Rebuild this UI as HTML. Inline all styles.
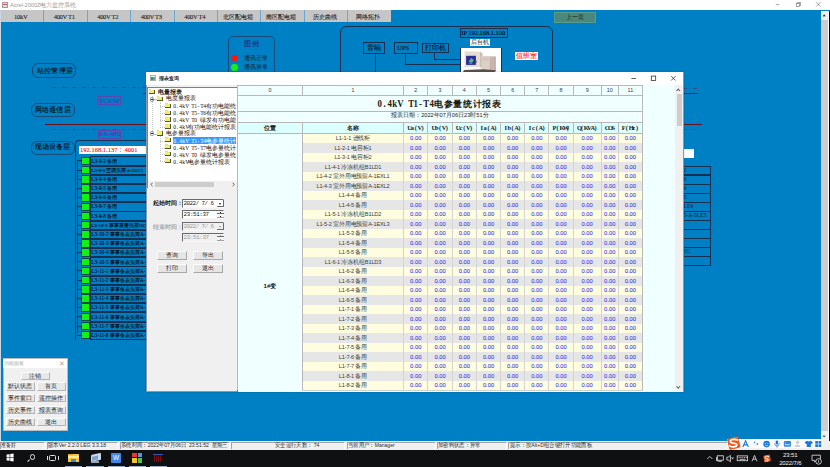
<!DOCTYPE html>
<html><head><meta charset="utf-8">
<style>
*{margin:0;padding:0;box-sizing:border-box}
html,body{width:830px;height:467px;overflow:hidden;background:#0080c4;font-family:"Liberation Sans",sans-serif;}
.a{position:absolute}
.t{position:absolute;white-space:nowrap;line-height:1}
.rbox{position:absolute;border:1px solid #1c3f66}
.sdiv{position:absolute;top:0;height:9px;border-left:1px solid #a8a8a8}
</style></head><body>
<div class="a" style="left:0px;top:0px;width:830px;height:10.3px;background:#fff"></div>
<div class="a" style="left:2px;top:2px;width:6px;height:6px;background:#e8d8dc;border:1px solid #b89098"></div>
<div class="a" style="left:3px;top:4px;width:4px;height:1px;background:#b06070"></div>
<div class="t" style="left:10px;top:2.6px;font-size:5.6px;color:#9a9a9a">Acrel-2000Z电力监控系统</div>
<svg class="a" style="left:770px;top:0" width="60" height="11" viewBox="0 0 60 11"><g stroke="#7a7a7a" stroke-width="0.7" fill="none"><line x1="5.8" y1="4.6" x2="9.2" y2="4.6"/><rect x="26.3" y="3.4" width="3.3" height="3.2"/><path d="M27.3 3.4 V2.5 H30.6 V5.7 H29.6"/><line x1="46.2" y1="2.3" x2="50.4" y2="6.5"/><line x1="50.4" y1="2.3" x2="46.2" y2="6.5"/></g></svg>
<div class="a" style="left:0px;top:10.3px;width:391px;height:11.6px;background:#c6c6c6"></div>
<div class="t" style="left:-0.8px;top:10.6px;width:43px;text-align:center;line-height:11.5px;color:#1a1a1a;-webkit-text-stroke:0.08px #1a1a1a;font-family:'Liberation Serif',serif;font-size:6.6px;letter-spacing:-0.35px">10kV</div>
<div class="a" style="left:43px;top:10.3px;width:1px;height:11.6px;background:#6aa8d0"></div>
<div class="t" style="left:42.2px;top:10.6px;width:44px;text-align:center;line-height:11.5px;color:#1a1a1a;-webkit-text-stroke:0.08px #1a1a1a;font-family:'Liberation Serif',serif;font-size:6.6px;letter-spacing:-0.35px">400V T1</div>
<div class="a" style="left:87px;top:10.3px;width:1px;height:11.6px;background:#6aa8d0"></div>
<div class="t" style="left:86.2px;top:10.6px;width:43px;text-align:center;line-height:11.5px;color:#1a1a1a;-webkit-text-stroke:0.08px #1a1a1a;font-family:'Liberation Serif',serif;font-size:6.6px;letter-spacing:-0.35px">400V T2</div>
<div class="a" style="left:130px;top:10.3px;width:1px;height:11.6px;background:#6aa8d0"></div>
<div class="t" style="left:129.2px;top:10.6px;width:44px;text-align:center;line-height:11.5px;color:#1a1a1a;-webkit-text-stroke:0.08px #1a1a1a;font-family:'Liberation Serif',serif;font-size:6.6px;letter-spacing:-0.35px">400V T3</div>
<div class="a" style="left:174px;top:10.3px;width:1px;height:11.6px;background:#6aa8d0"></div>
<div class="t" style="left:173.2px;top:10.6px;width:43px;text-align:center;line-height:11.5px;color:#1a1a1a;-webkit-text-stroke:0.08px #1a1a1a;font-family:'Liberation Serif',serif;font-size:6.6px;letter-spacing:-0.35px">400V T4</div>
<div class="a" style="left:217px;top:10.3px;width:1px;height:11.6px;background:#6aa8d0"></div>
<div class="t" style="left:216.2px;top:10.6px;width:43px;text-align:center;line-height:11.5px;color:#1a1a1a;-webkit-text-stroke:0.08px #1a1a1a;font-size:6.2px">北区配电箱</div>
<div class="a" style="left:260px;top:10.3px;width:1px;height:11.6px;background:#6aa8d0"></div>
<div class="t" style="left:259.2px;top:10.6px;width:44px;text-align:center;line-height:11.5px;color:#1a1a1a;-webkit-text-stroke:0.08px #1a1a1a;font-size:6.2px">南区配电箱</div>
<div class="a" style="left:304px;top:10.3px;width:1px;height:11.6px;background:#6aa8d0"></div>
<div class="t" style="left:303.2px;top:10.6px;width:43px;text-align:center;line-height:11.5px;color:#1a1a1a;-webkit-text-stroke:0.08px #1a1a1a;font-size:6.2px">历史曲线</div>
<div class="a" style="left:347px;top:10.3px;width:1px;height:11.6px;background:#6aa8d0"></div>
<div class="t" style="left:346.2px;top:10.6px;width:44px;text-align:center;line-height:11.5px;color:#1a1a1a;-webkit-text-stroke:0.08px #1a1a1a;font-size:6.2px">网络拓扑</div>
<div class="a" style="left:0px;top:11px;width:1.2px;height:430px;background:#c8d8e4"></div>
<div class="a" style="left:820.7px;top:10.8px;width:7.4px;height:439px;background:#f0f0f0"></div>
<div class="a" style="left:821.2px;top:20px;width:6.4px;height:411px;background:#cdcdcd"></div>
<div class="a" style="left:828.1px;top:10.8px;width:0.9px;height:456.2px;background:#fff"></div>
<div class="a" style="left:829px;top:10.8px;width:1px;height:456.2px;background:#0a0a0a"></div>
<div class="a" style="left:823.3px;top:14.6px;width:2.4px;height:2.4px;border-left:0.9px solid #333;border-top:0.9px solid #333;transform:rotate(45deg)"></div>
<div class="a" style="left:823.3px;top:435.4px;width:2.4px;height:2.4px;border-right:0.9px solid #555;border-bottom:0.9px solid #555;transform:rotate(45deg)"></div>
<!-- layers -->
<div class="a" style="left:32px;top:63.4px;width:44px;height:14.3px;border:1px solid #1a4a78;border-radius:6px"></div>
<div class="t" style="left:37px;top:67.6px;font-size:6.6px;color:#080c14;letter-spacing:0.2px;-webkit-text-stroke:0.1px #080c14">站控管理层</div>
<div class="a" style="left:30.8px;top:102.7px;width:44px;height:14.1px;border:1px solid #1a4a78;border-radius:6px"></div>
<div class="t" style="left:34.8px;top:106.5px;font-size:6.6px;color:#080c14;letter-spacing:0.2px;-webkit-text-stroke:0.1px #080c14">网络通信层</div>
<div class="a" style="left:30.8px;top:140.5px;width:44px;height:14.4px;border:1px solid #1a4a78;border-radius:6px"></div>
<div class="t" style="left:34.5px;top:144.4px;font-size:6.6px;color:#080c14;letter-spacing:0.2px;-webkit-text-stroke:0.1px #080c14">现场设备层</div>
<div class="a" style="left:52px;top:87.3px;width:95px;height:1px;background:repeating-linear-gradient(90deg,#32527a 0 4px,transparent 4px 6px,#32527a 6px 7.2px,transparent 7.2px 10px)"></div>
<div class="a" style="left:52px;top:128.7px;width:95px;height:1px;background:repeating-linear-gradient(90deg,#32527a 0 4px,transparent 4px 6px,#32527a 6px 7.2px,transparent 7.2px 10px)"></div>
<div class="a" style="left:45px;top:124px;width:102px;height:1.2px;background:#6a1020"></div>
<div class="a" style="left:142.5px;top:92.8px;width:4px;height:1.2px;background:#8a1020"></div>
<div class="a" style="left:97.7px;top:96.3px;width:23.6px;height:9px;border:1px solid #5a48b0"></div>
<div class="t" style="left:97.7px;top:97.8px;width:23.6px;text-align:center;font-size:7px;color:#5030c0;font-family:'Liberation Serif',serif;-webkit-text-stroke:0.1px #5030c0">TCP/IP</div>
<div class="a" style="left:97.7px;top:130.2px;width:23.6px;height:8.5px;border:1px solid #5a48b0"></div>
<div class="t" style="left:97.7px;top:131.4px;width:23.6px;text-align:center;font-size:7px;color:#5030c0;font-family:'Liberation Serif',serif;-webkit-text-stroke:0.1px #5030c0">RS-485</div>
<div class="a" style="left:75.4px;top:140.4px;width:80px;height:200px;border-left:1px solid #1a3050;border-top:1px solid #1a3050;border-top-left-radius:4px"></div>
<div class="a" style="left:78.8px;top:145.7px;width:70px;height:8.1px;background:#fff"></div>
<div class="t" style="left:80px;top:146.9px;font-size:6.5px;color:#f01010;font-family:'Liberation Serif',serif;-webkit-text-stroke:0.1px #f01010">192.168.1.137：4001</div>
<div class="a" style="left:76.7px;top:160px;width:1px;height:173px;background:#1a3050"></div>
<div class="a" style="left:76.7px;top:160.4px;width:4px;height:1px;background:#1a3050"></div>
<div class="a" style="left:80.8px;top:156.7px;width:8.8px;height:8.6px;background:#14f014;border:0.6px solid #0a4a50"></div>
<div class="a" style="left:89.6px;top:156.4px;width:60px;height:9.4px;border:1px solid #1a3050"></div>
<div class="t" style="left:91.3px;top:158.6px;font-size:5.3px;color:#050a14;font-family:'Liberation Serif',serif;-webkit-text-stroke:0.1px #050a14">L3-9-2 备用</div>
<div class="a" style="left:76.7px;top:169.6px;width:4px;height:1px;background:#1a3050"></div>
<div class="a" style="left:80.8px;top:165.9px;width:8.8px;height:8.6px;background:#14f014;border:0.6px solid #0a4a50"></div>
<div class="a" style="left:89.6px;top:165.6px;width:60px;height:9.4px;border:1px solid #1a3050"></div>
<div class="t" style="left:91.3px;top:167.8px;font-size:5.0px;color:#050a14;font-family:'Liberation Serif',serif;-webkit-text-stroke:0.1px #050a14">L3-9-3 空调负荷A-1DT1</div>
<div class="a" style="left:76.7px;top:178.7px;width:4px;height:1px;background:#1a3050"></div>
<div class="a" style="left:80.8px;top:175.0px;width:8.8px;height:8.6px;background:#14f014;border:0.6px solid #0a4a50"></div>
<div class="a" style="left:89.6px;top:174.7px;width:60px;height:9.4px;border:1px solid #1a3050"></div>
<div class="t" style="left:91.3px;top:176.9px;font-size:5.3px;color:#050a14;font-family:'Liberation Serif',serif;-webkit-text-stroke:0.1px #050a14">L3-9-4 备用</div>
<div class="a" style="left:76.7px;top:187.9px;width:4px;height:1px;background:#1a3050"></div>
<div class="a" style="left:80.8px;top:184.2px;width:8.8px;height:8.6px;background:#14f014;border:0.6px solid #0a4a50"></div>
<div class="a" style="left:89.6px;top:183.9px;width:60px;height:9.4px;border:1px solid #1a3050"></div>
<div class="t" style="left:91.3px;top:186.1px;font-size:5.3px;color:#050a14;font-family:'Liberation Serif',serif;-webkit-text-stroke:0.1px #050a14">L3-9-5 备用</div>
<div class="a" style="left:76.7px;top:197.1px;width:4px;height:1px;background:#1a3050"></div>
<div class="a" style="left:80.8px;top:193.4px;width:8.8px;height:8.6px;background:#14f014;border:0.6px solid #0a4a50"></div>
<div class="a" style="left:89.6px;top:193.1px;width:60px;height:9.4px;border:1px solid #1a3050"></div>
<div class="t" style="left:91.3px;top:195.3px;font-size:5.3px;color:#050a14;font-family:'Liberation Serif',serif;-webkit-text-stroke:0.1px #050a14">L3-9-6 备用</div>
<div class="a" style="left:76.7px;top:206.2px;width:4px;height:1px;background:#1a3050"></div>
<div class="a" style="left:80.8px;top:202.6px;width:8.8px;height:8.6px;background:#14f014;border:0.6px solid #0a4a50"></div>
<div class="a" style="left:89.6px;top:202.2px;width:60px;height:9.4px;border:1px solid #1a3050"></div>
<div class="t" style="left:91.3px;top:204.4px;font-size:5.3px;color:#050a14;font-family:'Liberation Serif',serif;-webkit-text-stroke:0.1px #050a14">L3-9-7 备用</div>
<div class="a" style="left:76.7px;top:215.4px;width:4px;height:1px;background:#1a3050"></div>
<div class="a" style="left:80.8px;top:211.7px;width:8.8px;height:8.6px;background:#14f014;border:0.6px solid #0a4a50"></div>
<div class="a" style="left:89.6px;top:211.4px;width:60px;height:9.4px;border:1px solid #1a3050"></div>
<div class="t" style="left:91.3px;top:213.6px;font-size:5.3px;color:#050a14;font-family:'Liberation Serif',serif;-webkit-text-stroke:0.1px #050a14">L3-9-8 备用</div>
<div class="a" style="left:76.7px;top:224.6px;width:4px;height:1px;background:#1a3050"></div>
<div class="a" style="left:80.8px;top:220.9px;width:8.8px;height:8.6px;background:#14f014;border:0.6px solid #0a4a50"></div>
<div class="a" style="left:89.6px;top:220.6px;width:60px;height:9.4px;border:1px solid #1a3050"></div>
<div class="t" style="left:91.3px;top:222.8px;font-size:5.0px;color:#050a14;font-family:'Liberation Serif',serif;-webkit-text-stroke:0.1px #050a14">L3-10-1 事事重要负荷DCS A</div>
<div class="a" style="left:76.7px;top:233.8px;width:4px;height:1px;background:#1a3050"></div>
<div class="a" style="left:80.8px;top:230.1px;width:8.8px;height:8.6px;background:#14f014;border:0.6px solid #0a4a50"></div>
<div class="a" style="left:89.6px;top:229.8px;width:60px;height:9.4px;border:1px solid #1a3050"></div>
<div class="t" style="left:91.3px;top:232.0px;font-size:5.3px;color:#050a14;font-family:'Liberation Serif',serif;-webkit-text-stroke:0.1px #050a14">L3-10-2 事事备表负荷A-</div>
<div class="a" style="left:76.7px;top:242.9px;width:4px;height:1px;background:#1a3050"></div>
<div class="a" style="left:80.8px;top:239.2px;width:8.8px;height:8.6px;background:#14f014;border:0.6px solid #0a4a50"></div>
<div class="a" style="left:89.6px;top:238.9px;width:60px;height:9.4px;border:1px solid #1a3050"></div>
<div class="t" style="left:91.3px;top:241.1px;font-size:5.3px;color:#050a14;font-family:'Liberation Serif',serif;-webkit-text-stroke:0.1px #050a14">L3-10-3 事事备表负荷A-</div>
<div class="a" style="left:76.7px;top:252.1px;width:4px;height:1px;background:#1a3050"></div>
<div class="a" style="left:80.8px;top:248.4px;width:8.8px;height:8.6px;background:#14f014;border:0.6px solid #0a4a50"></div>
<div class="a" style="left:89.6px;top:248.1px;width:60px;height:9.4px;border:1px solid #1a3050"></div>
<div class="t" style="left:91.3px;top:250.3px;font-size:5.3px;color:#050a14;font-family:'Liberation Serif',serif;-webkit-text-stroke:0.1px #050a14">L3-10-4 事事备表负荷A-</div>
<div class="a" style="left:76.7px;top:261.3px;width:4px;height:1px;background:#1a3050"></div>
<div class="a" style="left:80.8px;top:257.6px;width:8.8px;height:8.6px;background:#14f014;border:0.6px solid #0a4a50"></div>
<div class="a" style="left:89.6px;top:257.3px;width:60px;height:9.4px;border:1px solid #1a3050"></div>
<div class="t" style="left:91.3px;top:259.5px;font-size:5.3px;color:#050a14;font-family:'Liberation Serif',serif;-webkit-text-stroke:0.1px #050a14">L3-10-5 事事备表负荷A-</div>
<div class="a" style="left:76.7px;top:270.4px;width:4px;height:1px;background:#1a3050"></div>
<div class="a" style="left:80.8px;top:266.7px;width:8.8px;height:8.6px;background:#14f014;border:0.6px solid #0a4a50"></div>
<div class="a" style="left:89.6px;top:266.4px;width:60px;height:9.4px;border:1px solid #1a3050"></div>
<div class="t" style="left:91.3px;top:268.6px;font-size:5.3px;color:#050a14;font-family:'Liberation Serif',serif;-webkit-text-stroke:0.1px #050a14">L3-11-1 事事备表负荷A-</div>
<div class="a" style="left:76.7px;top:279.6px;width:4px;height:1px;background:#1a3050"></div>
<div class="a" style="left:80.8px;top:275.9px;width:8.8px;height:8.6px;background:#14f014;border:0.6px solid #0a4a50"></div>
<div class="a" style="left:89.6px;top:275.6px;width:60px;height:9.4px;border:1px solid #1a3050"></div>
<div class="t" style="left:91.3px;top:277.8px;font-size:5.3px;color:#050a14;font-family:'Liberation Serif',serif;-webkit-text-stroke:0.1px #050a14">L3-11-2 事事备表负荷A-</div>
<div class="a" style="left:76.7px;top:288.8px;width:4px;height:1px;background:#1a3050"></div>
<div class="a" style="left:80.8px;top:285.1px;width:8.8px;height:8.6px;background:#14f014;border:0.6px solid #0a4a50"></div>
<div class="a" style="left:89.6px;top:284.8px;width:60px;height:9.4px;border:1px solid #1a3050"></div>
<div class="t" style="left:91.3px;top:287.0px;font-size:5.3px;color:#050a14;font-family:'Liberation Serif',serif;-webkit-text-stroke:0.1px #050a14">L3-11-3 事事备表负荷A-</div>
<div class="a" style="left:76.7px;top:298.0px;width:4px;height:1px;background:#1a3050"></div>
<div class="a" style="left:80.8px;top:294.3px;width:8.8px;height:8.6px;background:#14f014;border:0.6px solid #0a4a50"></div>
<div class="a" style="left:89.6px;top:294.0px;width:60px;height:9.4px;border:1px solid #1a3050"></div>
<div class="t" style="left:91.3px;top:296.2px;font-size:5.3px;color:#050a14;font-family:'Liberation Serif',serif;-webkit-text-stroke:0.1px #050a14">L3-11-4 事事备表负荷A-</div>
<div class="a" style="left:76.7px;top:307.1px;width:4px;height:1px;background:#1a3050"></div>
<div class="a" style="left:80.8px;top:303.4px;width:8.8px;height:8.6px;background:#14f014;border:0.6px solid #0a4a50"></div>
<div class="a" style="left:89.6px;top:303.1px;width:60px;height:9.4px;border:1px solid #1a3050"></div>
<div class="t" style="left:91.3px;top:305.3px;font-size:5.3px;color:#050a14;font-family:'Liberation Serif',serif;-webkit-text-stroke:0.1px #050a14">L3-11-5 事事备表负荷A-</div>
<div class="a" style="left:76.7px;top:316.3px;width:4px;height:1px;background:#1a3050"></div>
<div class="a" style="left:80.8px;top:312.6px;width:8.8px;height:8.6px;background:#14f014;border:0.6px solid #0a4a50"></div>
<div class="a" style="left:89.6px;top:312.3px;width:60px;height:9.4px;border:1px solid #1a3050"></div>
<div class="t" style="left:91.3px;top:314.5px;font-size:5.3px;color:#050a14;font-family:'Liberation Serif',serif;-webkit-text-stroke:0.1px #050a14">L3-11-6 事事备表负荷A-</div>
<div class="a" style="left:76.7px;top:325.5px;width:4px;height:1px;background:#1a3050"></div>
<div class="a" style="left:80.8px;top:321.8px;width:8.8px;height:8.6px;background:#14f014;border:0.6px solid #0a4a50"></div>
<div class="a" style="left:89.6px;top:321.5px;width:60px;height:9.4px;border:1px solid #1a3050"></div>
<div class="t" style="left:91.3px;top:323.7px;font-size:5.3px;color:#050a14;font-family:'Liberation Serif',serif;-webkit-text-stroke:0.1px #050a14">L3-11-7 事事备表负荷A-</div>
<div class="a" style="left:76.7px;top:334.6px;width:4px;height:1px;background:#1a3050"></div>
<div class="a" style="left:80.8px;top:330.9px;width:8.8px;height:8.6px;background:#14f014;border:0.6px solid #0a4a50"></div>
<div class="a" style="left:89.6px;top:330.6px;width:60px;height:9.4px;border:1px solid #1a3050"></div>
<div class="t" style="left:91.3px;top:332.8px;font-size:5.3px;color:#050a14;font-family:'Liberation Serif',serif;-webkit-text-stroke:0.1px #050a14">L3-11-8 事事备表负荷A-</div>
<div class="a" style="left:227.7px;top:36.4px;width:47.5px;height:40px;border:1px solid #1a4a78;border-radius:5px"></div>
<div class="t" style="left:243.6px;top:41.3px;font-size:6.6px;color:#1a3a88;letter-spacing:1.2px;-webkit-text-stroke:0.2px #1a3a88">图例</div>
<div class="a" style="left:231.4px;top:54.7px;width:6.3px;height:6.3px;border-radius:50%;background:#ff1414"></div>
<div class="t" style="left:243.5px;top:54.7px;font-size:6.3px;color:#0a1628">通讯正常</div>
<div class="a" style="left:231.4px;top:64.4px;width:6.3px;height:6.3px;border-radius:50%;background:#14f014"></div>
<div class="t" style="left:243.5px;top:64.4px;font-size:6.3px;color:#0a1628">通讯异常</div>
<div class="a" style="left:339.8px;top:26.2px;width:213px;height:60px;border:1px solid #1a3050;border-radius:6px"></div>
<div class="a" style="left:362.9px;top:42.4px;width:21.7px;height:11.3px;border:1px solid #1a3050"></div>
<div class="t" style="left:362.9px;top:44.9px;width:21.7px;text-align:center;font-size:6.5px;color:#050a14;-webkit-text-stroke:0.08px #050a14">音响</div>
<div class="a" style="left:394.2px;top:42.4px;width:23.5px;height:11.3px;border:1px solid #1a3050"></div>
<div class="t" style="left:394.2px;top:44.9px;width:18px;text-align:center;font-size:6.4px;color:#050a14;font-family:'Liberation Serif',serif;-webkit-text-stroke:0.08px #050a14">UPS</div>
<div class="a" style="left:421.6px;top:42.5px;width:27.1px;height:10.8px;border:1px solid #1a3050"></div>
<div class="t" style="left:421.6px;top:44.8px;width:27.1px;text-align:center;font-size:6.5px;color:#050a14;-webkit-text-stroke:0.08px #050a14">打印机</div>
<div class="a" style="left:375px;top:53.7px;width:1px;height:20px;background:#1a3050"></div>
<div class="a" style="left:405px;top:53.7px;width:1px;height:10.6px;background:#1a3050"></div>
<div class="a" style="left:405px;top:64px;width:55px;height:1px;background:#1a3050"></div>
<div class="a" style="left:434.4px;top:53.3px;width:1px;height:6.2px;background:#1a3050"></div>
<div class="a" style="left:434.4px;top:59.2px;width:26px;height:1px;background:#1a3050"></div>
<div class="a" style="left:460.3px;top:28.1px;width:48.2px;height:9.6px;border:1px solid #1a3050"></div>
<div class="t" style="left:461.3px;top:29.8px;font-size:6.4px;color:#050a14;font-family:'Liberation Serif',serif;-webkit-text-stroke:0.12px #050a14">IP 192.168.1.100</div>
<div class="a" style="left:469.7px;top:38.7px;width:20.5px;height:7.7px;background:#fff"></div>
<div class="t" style="left:469.7px;top:39.3px;width:20.5px;text-align:center;font-size:6.4px;color:#111">后台机</div>
<div class="a" style="left:459.5px;top:48.2px;width:42.8px;height:24px;background:#fff;border-left:0.8px solid #1a3050;border-right:0.8px solid #1a3050"></div>
<svg class="a" style="left:455px;top:45px" width="50" height="27" viewBox="0 0 50 27">
<path d="M9.6 6.3 L25 6.8 L27.5 8.5 L27 22.3 L9.6 22.3 Z" fill="#e6dcd0"/>
<path d="M25 6.8 L27.5 8.5 L27 22.3 L25 22.3 Z" fill="#cdbfb2"/>
<rect x="11.1" y="10.8" width="9.8" height="9.1" fill="#2c2c98"/>
<path d="M13.5 16.5 L16.3 13 L18.8 15 L17 18 Z" fill="#50c070"/>
<path d="M13 18.5 L18 19 L15.5 17.5 Z" fill="#40a0d0"/>
<rect x="20.2" y="15.6" width="1.5" height="2.2" fill="#6a5a50"/>
<rect x="26.5" y="11.1" width="8.2" height="14.9" fill="#dcd0c8"/>
<rect x="34.5" y="11.4" width="6.5" height="14.6" fill="#c8b4ac"/>
<path d="M27.5 13 H33.5 M27.5 15 H33.5" stroke="#bcaea4" stroke-width="0.5"/>
<path d="M9 25 L28 24.2 L41 25.2 L40 27 L8 27 Z" fill="#5a524a"/>
</svg>
<div class="a" style="left:515.2px;top:51.8px;width:23.1px;height:8.7px;background:#fff"></div>
<div class="t" style="left:515.2px;top:52.9px;width:23.1px;text-align:center;font-size:6.5px;color:#ff1a1a;-webkit-text-stroke:0.1px #ff1a1a">值班室</div>
<div class="a" style="left:553.7px;top:11.7px;width:42.8px;height:11px;background:#4a887c;border:0.6px solid #5c9a90"></div>
<div class="t" style="left:553.7px;top:14px;width:42.8px;text-align:center;font-size:6.3px;color:#111">上一页</div>
<div class="a" style="left:683px;top:87.5px;width:14px;height:1px;background:repeating-linear-gradient(90deg,#32527a 0 4px,transparent 4px 6px,#32527a 6px 7.2px,transparent 7.2px 10px)"></div>
<div class="a" style="left:683px;top:92.8px;width:15px;height:1.2px;background:#6a1020"></div>
<div class="a" style="left:683px;top:124px;width:19px;height:1.2px;background:#6a1020"></div>
<div class="a" style="left:683px;top:128.8px;width:13px;height:1px;background:repeating-linear-gradient(90deg,#32527a 0 4px,transparent 4px 6px,#32527a 6px 7.2px,transparent 7.2px 10px)"></div>
<div class="a" style="left:683px;top:149.3px;width:10.5px;height:8.4px;background:#fff"></div>
<div class="a" style="left:670px;top:165.7px;width:40.8px;height:9.8px;border:1px solid #1a3050"></div>
<div class="t" style="left:683.5px;top:167.9px;font-size:5.6px;color:#0a1628;font-family:'Liberation Serif',serif">2</div>
<div class="a" style="left:670px;top:174.8px;width:40.8px;height:9.8px;border:1px solid #1a3050"></div>
<div class="t" style="left:683.5px;top:177.0px;font-size:5.6px;color:#0a1628;font-family:'Liberation Serif',serif">3</div>
<div class="a" style="left:670px;top:183.8px;width:40.8px;height:9.8px;border:1px solid #1a3050"></div>
<div class="t" style="left:683.5px;top:186.0px;font-size:5.6px;color:#0a1628;font-family:'Liberation Serif',serif">4</div>
<div class="a" style="left:670px;top:192.9px;width:40.8px;height:9.8px;border:1px solid #1a3050"></div>
<div class="t" style="left:683.5px;top:195.1px;font-size:5.6px;color:#0a1628;font-family:'Liberation Serif',serif">5</div>
<div class="a" style="left:670px;top:201.9px;width:40.8px;height:9.8px;border:1px solid #1a3050"></div>
<div class="t" style="left:683.5px;top:204.1px;font-size:5.6px;color:#0a1628;font-family:'Liberation Serif',serif">LE4</div>
<div class="a" style="left:670px;top:211.0px;width:40.8px;height:9.8px;border:1px solid #1a3050"></div>
<div class="t" style="left:683.5px;top:213.2px;font-size:5.6px;color:#0a1628;font-family:'Liberation Serif',serif">5-A-5LE5</div>
<div class="a" style="left:670px;top:220.1px;width:40.8px;height:9.8px;border:1px solid #1a3050"></div>
<div class="a" style="left:670px;top:229.1px;width:40.8px;height:9.8px;border:1px solid #1a3050"></div>
<div class="a" style="left:670px;top:238.2px;width:40.8px;height:9.8px;border:1px solid #1a3050"></div>
<div class="a" style="left:670px;top:247.2px;width:40.8px;height:9.8px;border:1px solid #1a3050"></div>
<div class="t" style="left:683.5px;top:249.4px;font-size:5.6px;color:#0a1628;font-family:'Liberation Serif',serif">TC</div>
<div class="a" style="left:670px;top:256.3px;width:40.8px;height:9.8px;border:1px solid #1a3050"></div>
<!-- dialog -->
<div class="a" style="left:145.5px;top:71.6px;width:538px;height:320.6px;background:#f0f0f0;border:1px solid #8a9aa8;box-shadow:0 0 2px rgba(0,0,0,0.2)"></div>
<div class="a" style="left:146px;top:72.2px;width:537px;height:13.1px;background:#fff"></div>
<div class="a" style="left:149.8px;top:75.1px;width:6.4px;height:5.5px;background:#f4f8f4;border:0.8px solid #a8b0a8"></div>
<div class="a" style="left:151px;top:76.8px;width:2.2px;height:3px;background:#20a060"></div>
<div class="a" style="left:153.3px;top:76.8px;width:1.6px;height:3px;background:#8090e0"></div>
<div class="t" style="left:159px;top:75.6px;font-size:5.3px;color:#111;-webkit-text-stroke:0.15px #111">报表查询</div>
<svg class="a" style="left:625px;top:72px" width="55" height="13" viewBox="0 0 55 13"><g stroke="#2a2a2a" stroke-width="0.75" fill="none"><line x1="6.4" y1="6.5" x2="11" y2="6.5"/><rect x="26.3" y="4.1" width="4.4" height="4.4"/><line x1="46.2" y1="4.1" x2="50.6" y2="8.5"/><line x1="50.6" y1="4.1" x2="46.2" y2="8.5"/></g></svg>
<div class="a" style="left:147.2px;top:86.8px;width:90px;height:101px;background:#fff;border-top:1px solid #828282;border-left:1px solid #828282"></div>
<div class="a" style="left:148.9px;top:89.9px;width:6px;height:4.4px;background:#eeee74;border-right:0.9px solid #55552a;border-bottom:0.9px solid #55552a"></div>
<div class="a" style="left:148.9px;top:89.2px;width:2.6px;height:0.9px;background:#e4e070"></div>
<div class="t" style="left:157.5px;top:89.6px;font-size:5.7px;color:#111;font-weight:bold">电量报表</div>
<div class="a" style="left:156.6px;top:96.78px;width:6px;height:4.4px;background:#eeee74;border-right:0.9px solid #55552a;border-bottom:0.9px solid #55552a"></div>
<div class="a" style="left:156.6px;top:96.08px;width:2.6px;height:0.9px;background:#e4e070"></div>
<div class="t" style="left:165.6px;top:96.48px;font-size:5.7px;color:#111;font-weight:normal">电度量报表</div>
<div class="a" style="left:149.5px;top:97.08px;width:4.6px;height:4.5px;border:0.7px solid #8c8c8c;border-radius:1.6px;background:#fff"></div>
<div class="a" style="left:150.6px;top:99.08px;width:2.4px;height:0.6px;background:#333"></div>
<div class="a" style="left:154.2px;top:99.38px;width:2.2px;height:0px;border-top:0.6px dotted #c0c0c0"></div>
<div class="a" style="left:165.0px;top:103.66px;width:6px;height:4.4px;background:#eeee74;border-right:0.9px solid #55552a;border-bottom:0.9px solid #55552a"></div>
<div class="a" style="left:165.0px;top:102.96px;width:2.6px;height:0.9px;background:#e4e070"></div>
<div class="t" style="left:173.3px;top:103.46px;font-size:5.5px;color:#111;width:62.9px;overflow:hidden"><span style="display:inline-block;width:3.0px;text-align:center;transform:scaleX(0.88);font-family:'Liberation Serif',serif;font-size:6.3px">0</span><span style="display:inline-block;width:3.0px;text-align:center;transform:scaleX(0.88);font-family:'Liberation Serif',serif;font-size:6.3px">.</span><span style="display:inline-block;width:3.0px;text-align:center;transform:scaleX(0.88);font-family:'Liberation Serif',serif;font-size:6.3px">4</span><span style="display:inline-block;width:3.0px;text-align:center;transform:scaleX(0.88);font-family:'Liberation Serif',serif;font-size:6.3px">k</span><span style="display:inline-block;width:3.0px;text-align:center;transform:scaleX(0.88);font-family:'Liberation Serif',serif;font-size:6.3px">V</span><span style="display:inline-block;width:3.0px;text-align:center;transform:scaleX(0.88);font-family:'Liberation Serif',serif;font-size:6.3px">&nbsp;</span><span style="display:inline-block;width:3.0px;text-align:center;transform:scaleX(0.88);font-family:'Liberation Serif',serif;font-size:6.3px">T</span><span style="display:inline-block;width:3.0px;text-align:center;transform:scaleX(0.88);font-family:'Liberation Serif',serif;font-size:6.3px">1</span><span style="display:inline-block;width:3.0px;text-align:center;transform:scaleX(0.88);font-family:'Liberation Serif',serif;font-size:6.3px">-</span><span style="display:inline-block;width:3.0px;text-align:center;transform:scaleX(0.88);font-family:'Liberation Serif',serif;font-size:6.3px">T</span><span style="display:inline-block;width:3.0px;text-align:center;transform:scaleX(0.88);font-family:'Liberation Serif',serif;font-size:6.3px">4</span><span style="display:inline-block;width:5.9px;text-align:center;">有</span><span style="display:inline-block;width:5.9px;text-align:center;">功</span><span style="display:inline-block;width:5.9px;text-align:center;">电</span><span style="display:inline-block;width:5.9px;text-align:center;">能</span><span style="display:inline-block;width:5.9px;text-align:center;">统</span><span style="display:inline-block;width:5.9px;text-align:center;">计</span><span style="display:inline-block;width:5.9px;text-align:center;">报</span><span style="display:inline-block;width:5.9px;text-align:center;">表</span></div>
<div class="a" style="left:159.5px;top:106.26px;width:5.3px;height:0px;border-top:0.6px dotted #c0c0c0"></div>
<div class="a" style="left:165.0px;top:110.54px;width:6px;height:4.4px;background:#eeee74;border-right:0.9px solid #55552a;border-bottom:0.9px solid #55552a"></div>
<div class="a" style="left:165.0px;top:109.84px;width:2.6px;height:0.9px;background:#e4e070"></div>
<div class="t" style="left:173.3px;top:110.34px;font-size:5.5px;color:#111;width:62.9px;overflow:hidden"><span style="display:inline-block;width:3.0px;text-align:center;transform:scaleX(0.88);font-family:'Liberation Serif',serif;font-size:6.3px">0</span><span style="display:inline-block;width:3.0px;text-align:center;transform:scaleX(0.88);font-family:'Liberation Serif',serif;font-size:6.3px">.</span><span style="display:inline-block;width:3.0px;text-align:center;transform:scaleX(0.88);font-family:'Liberation Serif',serif;font-size:6.3px">4</span><span style="display:inline-block;width:3.0px;text-align:center;transform:scaleX(0.88);font-family:'Liberation Serif',serif;font-size:6.3px">k</span><span style="display:inline-block;width:3.0px;text-align:center;transform:scaleX(0.88);font-family:'Liberation Serif',serif;font-size:6.3px">V</span><span style="display:inline-block;width:3.0px;text-align:center;transform:scaleX(0.88);font-family:'Liberation Serif',serif;font-size:6.3px">&nbsp;</span><span style="display:inline-block;width:3.0px;text-align:center;transform:scaleX(0.88);font-family:'Liberation Serif',serif;font-size:6.3px">T</span><span style="display:inline-block;width:3.0px;text-align:center;transform:scaleX(0.88);font-family:'Liberation Serif',serif;font-size:6.3px">5</span><span style="display:inline-block;width:3.0px;text-align:center;transform:scaleX(0.88);font-family:'Liberation Serif',serif;font-size:6.3px">-</span><span style="display:inline-block;width:3.0px;text-align:center;transform:scaleX(0.88);font-family:'Liberation Serif',serif;font-size:6.3px">T</span><span style="display:inline-block;width:3.0px;text-align:center;transform:scaleX(0.88);font-family:'Liberation Serif',serif;font-size:6.3px">6</span><span style="display:inline-block;width:5.9px;text-align:center;">有</span><span style="display:inline-block;width:5.9px;text-align:center;">功</span><span style="display:inline-block;width:5.9px;text-align:center;">电</span><span style="display:inline-block;width:5.9px;text-align:center;">能</span><span style="display:inline-block;width:5.9px;text-align:center;">统</span><span style="display:inline-block;width:5.9px;text-align:center;">计</span><span style="display:inline-block;width:5.9px;text-align:center;">报</span><span style="display:inline-block;width:5.9px;text-align:center;">表</span></div>
<div class="a" style="left:159.5px;top:113.14px;width:5.3px;height:0px;border-top:0.6px dotted #c0c0c0"></div>
<div class="a" style="left:165.0px;top:117.42px;width:6px;height:4.4px;background:#eeee74;border-right:0.9px solid #55552a;border-bottom:0.9px solid #55552a"></div>
<div class="a" style="left:165.0px;top:116.72px;width:2.6px;height:0.9px;background:#e4e070"></div>
<div class="t" style="left:173.3px;top:117.22px;font-size:5.5px;color:#111;width:62.9px;overflow:hidden"><span style="display:inline-block;width:3.0px;text-align:center;transform:scaleX(0.88);font-family:'Liberation Serif',serif;font-size:6.3px">0</span><span style="display:inline-block;width:3.0px;text-align:center;transform:scaleX(0.88);font-family:'Liberation Serif',serif;font-size:6.3px">.</span><span style="display:inline-block;width:3.0px;text-align:center;transform:scaleX(0.88);font-family:'Liberation Serif',serif;font-size:6.3px">4</span><span style="display:inline-block;width:3.0px;text-align:center;transform:scaleX(0.88);font-family:'Liberation Serif',serif;font-size:6.3px">k</span><span style="display:inline-block;width:3.0px;text-align:center;transform:scaleX(0.88);font-family:'Liberation Serif',serif;font-size:6.3px">V</span><span style="display:inline-block;width:3.0px;text-align:center;transform:scaleX(0.88);font-family:'Liberation Serif',serif;font-size:6.3px">&nbsp;</span><span style="display:inline-block;width:3.0px;text-align:center;transform:scaleX(0.88);font-family:'Liberation Serif',serif;font-size:6.3px">T</span><span style="display:inline-block;width:3.0px;text-align:center;transform:scaleX(0.88);font-family:'Liberation Serif',serif;font-size:6.3px">0</span><span style="display:inline-block;width:3.0px;text-align:center;transform:scaleX(0.88);font-family:'Liberation Serif',serif;font-size:6.3px">&nbsp;</span><span style="display:inline-block;width:5.9px;text-align:center;">绿</span><span style="display:inline-block;width:5.9px;text-align:center;">发</span><span style="display:inline-block;width:5.9px;text-align:center;">有</span><span style="display:inline-block;width:5.9px;text-align:center;">功</span><span style="display:inline-block;width:5.9px;text-align:center;">电</span><span style="display:inline-block;width:5.9px;text-align:center;">能</span><span style="display:inline-block;width:5.9px;text-align:center;">统</span><span style="display:inline-block;width:5.9px;text-align:center;">计</span></div>
<div class="a" style="left:159.5px;top:120.02px;width:5.3px;height:0px;border-top:0.6px dotted #c0c0c0"></div>
<div class="a" style="left:165.0px;top:124.3px;width:6px;height:4.4px;background:#eeee74;border-right:0.9px solid #55552a;border-bottom:0.9px solid #55552a"></div>
<div class="a" style="left:165.0px;top:123.6px;width:2.6px;height:0.9px;background:#e4e070"></div>
<div class="t" style="left:173.3px;top:124.1px;font-size:5.5px;color:#111;width:62.9px;overflow:hidden"><span style="display:inline-block;width:3.0px;text-align:center;transform:scaleX(0.88);font-family:'Liberation Serif',serif;font-size:6.3px">0</span><span style="display:inline-block;width:3.0px;text-align:center;transform:scaleX(0.88);font-family:'Liberation Serif',serif;font-size:6.3px">.</span><span style="display:inline-block;width:3.0px;text-align:center;transform:scaleX(0.88);font-family:'Liberation Serif',serif;font-size:6.3px">4</span><span style="display:inline-block;width:3.0px;text-align:center;transform:scaleX(0.88);font-family:'Liberation Serif',serif;font-size:6.3px">k</span><span style="display:inline-block;width:3.0px;text-align:center;transform:scaleX(0.88);font-family:'Liberation Serif',serif;font-size:6.3px">V</span><span style="display:inline-block;width:5.9px;text-align:center;">有</span><span style="display:inline-block;width:5.9px;text-align:center;">功</span><span style="display:inline-block;width:5.9px;text-align:center;">电</span><span style="display:inline-block;width:5.9px;text-align:center;">能</span><span style="display:inline-block;width:5.9px;text-align:center;">统</span><span style="display:inline-block;width:5.9px;text-align:center;">计</span><span style="display:inline-block;width:5.9px;text-align:center;">报</span><span style="display:inline-block;width:5.9px;text-align:center;">表</span></div>
<div class="a" style="left:159.5px;top:126.9px;width:5.3px;height:0px;border-top:0.6px dotted #c0c0c0"></div>
<div class="a" style="left:156.6px;top:131.18px;width:6px;height:4.4px;background:#eeee74;border-right:0.9px solid #55552a;border-bottom:0.9px solid #55552a"></div>
<div class="a" style="left:156.6px;top:130.48px;width:2.6px;height:0.9px;background:#e4e070"></div>
<div class="t" style="left:165.6px;top:130.88px;font-size:5.7px;color:#111;font-weight:normal">电参量报表</div>
<div class="a" style="left:149.5px;top:131.48px;width:4.6px;height:4.5px;border:0.7px solid #8c8c8c;border-radius:1.6px;background:#fff"></div>
<div class="a" style="left:150.6px;top:133.48px;width:2.4px;height:0.6px;background:#333"></div>
<div class="a" style="left:154.2px;top:133.78px;width:2.2px;height:0px;border-top:0.6px dotted #c0c0c0"></div>
<div class="a" style="left:165.0px;top:138.06px;width:6px;height:4.4px;background:#eeee74;border-right:0.9px solid #55552a;border-bottom:0.9px solid #55552a"></div>
<div class="a" style="left:165.0px;top:137.36px;width:2.6px;height:0.9px;background:#e4e070"></div>
<div class="a" style="left:172.6px;top:136.96px;width:63.4px;height:6.6px;background:#3399ff"></div>
<div class="t" style="left:173.3px;top:137.86px;font-size:5.5px;color:#fff;width:62.9px;overflow:hidden"><span style="display:inline-block;width:3.0px;text-align:center;transform:scaleX(0.88);font-family:'Liberation Serif',serif;font-size:6.3px">0</span><span style="display:inline-block;width:3.0px;text-align:center;transform:scaleX(0.88);font-family:'Liberation Serif',serif;font-size:6.3px">.</span><span style="display:inline-block;width:3.0px;text-align:center;transform:scaleX(0.88);font-family:'Liberation Serif',serif;font-size:6.3px">4</span><span style="display:inline-block;width:3.0px;text-align:center;transform:scaleX(0.88);font-family:'Liberation Serif',serif;font-size:6.3px">k</span><span style="display:inline-block;width:3.0px;text-align:center;transform:scaleX(0.88);font-family:'Liberation Serif',serif;font-size:6.3px">V</span><span style="display:inline-block;width:3.0px;text-align:center;transform:scaleX(0.88);font-family:'Liberation Serif',serif;font-size:6.3px">&nbsp;</span><span style="display:inline-block;width:3.0px;text-align:center;transform:scaleX(0.88);font-family:'Liberation Serif',serif;font-size:6.3px">T</span><span style="display:inline-block;width:3.0px;text-align:center;transform:scaleX(0.88);font-family:'Liberation Serif',serif;font-size:6.3px">1</span><span style="display:inline-block;width:3.0px;text-align:center;transform:scaleX(0.88);font-family:'Liberation Serif',serif;font-size:6.3px">-</span><span style="display:inline-block;width:3.0px;text-align:center;transform:scaleX(0.88);font-family:'Liberation Serif',serif;font-size:6.3px">T</span><span style="display:inline-block;width:3.0px;text-align:center;transform:scaleX(0.88);font-family:'Liberation Serif',serif;font-size:6.3px">4</span><span style="display:inline-block;width:5.9px;text-align:center;">电</span><span style="display:inline-block;width:5.9px;text-align:center;">参</span><span style="display:inline-block;width:5.9px;text-align:center;">量</span><span style="display:inline-block;width:5.9px;text-align:center;">统</span><span style="display:inline-block;width:5.9px;text-align:center;">计</span><span style="display:inline-block;width:5.9px;text-align:center;">报</span><span style="display:inline-block;width:5.9px;text-align:center;">表</span></div>
<div class="a" style="left:159.5px;top:140.66px;width:5.3px;height:0px;border-top:0.6px dotted #c0c0c0"></div>
<div class="a" style="left:165.0px;top:144.94px;width:6px;height:4.4px;background:#eeee74;border-right:0.9px solid #55552a;border-bottom:0.9px solid #55552a"></div>
<div class="a" style="left:165.0px;top:144.24px;width:2.6px;height:0.9px;background:#e4e070"></div>
<div class="t" style="left:173.3px;top:144.74px;font-size:5.5px;color:#111;width:62.9px;overflow:hidden"><span style="display:inline-block;width:3.0px;text-align:center;transform:scaleX(0.88);font-family:'Liberation Serif',serif;font-size:6.3px">0</span><span style="display:inline-block;width:3.0px;text-align:center;transform:scaleX(0.88);font-family:'Liberation Serif',serif;font-size:6.3px">.</span><span style="display:inline-block;width:3.0px;text-align:center;transform:scaleX(0.88);font-family:'Liberation Serif',serif;font-size:6.3px">4</span><span style="display:inline-block;width:3.0px;text-align:center;transform:scaleX(0.88);font-family:'Liberation Serif',serif;font-size:6.3px">k</span><span style="display:inline-block;width:3.0px;text-align:center;transform:scaleX(0.88);font-family:'Liberation Serif',serif;font-size:6.3px">V</span><span style="display:inline-block;width:3.0px;text-align:center;transform:scaleX(0.88);font-family:'Liberation Serif',serif;font-size:6.3px">&nbsp;</span><span style="display:inline-block;width:3.0px;text-align:center;transform:scaleX(0.88);font-family:'Liberation Serif',serif;font-size:6.3px">T</span><span style="display:inline-block;width:3.0px;text-align:center;transform:scaleX(0.88);font-family:'Liberation Serif',serif;font-size:6.3px">5</span><span style="display:inline-block;width:3.0px;text-align:center;transform:scaleX(0.88);font-family:'Liberation Serif',serif;font-size:6.3px">-</span><span style="display:inline-block;width:3.0px;text-align:center;transform:scaleX(0.88);font-family:'Liberation Serif',serif;font-size:6.3px">T</span><span style="display:inline-block;width:3.0px;text-align:center;transform:scaleX(0.88);font-family:'Liberation Serif',serif;font-size:6.3px">7</span><span style="display:inline-block;width:5.9px;text-align:center;">电</span><span style="display:inline-block;width:5.9px;text-align:center;">参</span><span style="display:inline-block;width:5.9px;text-align:center;">量</span><span style="display:inline-block;width:5.9px;text-align:center;">统</span><span style="display:inline-block;width:5.9px;text-align:center;">计</span><span style="display:inline-block;width:5.9px;text-align:center;">报</span><span style="display:inline-block;width:5.9px;text-align:center;">表</span></div>
<div class="a" style="left:159.5px;top:147.54px;width:5.3px;height:0px;border-top:0.6px dotted #c0c0c0"></div>
<div class="a" style="left:165.0px;top:151.82px;width:6px;height:4.4px;background:#eeee74;border-right:0.9px solid #55552a;border-bottom:0.9px solid #55552a"></div>
<div class="a" style="left:165.0px;top:151.12px;width:2.6px;height:0.9px;background:#e4e070"></div>
<div class="t" style="left:173.3px;top:151.62px;font-size:5.5px;color:#111;width:62.9px;overflow:hidden"><span style="display:inline-block;width:3.0px;text-align:center;transform:scaleX(0.88);font-family:'Liberation Serif',serif;font-size:6.3px">0</span><span style="display:inline-block;width:3.0px;text-align:center;transform:scaleX(0.88);font-family:'Liberation Serif',serif;font-size:6.3px">.</span><span style="display:inline-block;width:3.0px;text-align:center;transform:scaleX(0.88);font-family:'Liberation Serif',serif;font-size:6.3px">4</span><span style="display:inline-block;width:3.0px;text-align:center;transform:scaleX(0.88);font-family:'Liberation Serif',serif;font-size:6.3px">k</span><span style="display:inline-block;width:3.0px;text-align:center;transform:scaleX(0.88);font-family:'Liberation Serif',serif;font-size:6.3px">V</span><span style="display:inline-block;width:3.0px;text-align:center;transform:scaleX(0.88);font-family:'Liberation Serif',serif;font-size:6.3px">&nbsp;</span><span style="display:inline-block;width:3.0px;text-align:center;transform:scaleX(0.88);font-family:'Liberation Serif',serif;font-size:6.3px">T</span><span style="display:inline-block;width:3.0px;text-align:center;transform:scaleX(0.88);font-family:'Liberation Serif',serif;font-size:6.3px">0</span><span style="display:inline-block;width:3.0px;text-align:center;transform:scaleX(0.88);font-family:'Liberation Serif',serif;font-size:6.3px">&nbsp;</span><span style="display:inline-block;width:5.9px;text-align:center;">绿</span><span style="display:inline-block;width:5.9px;text-align:center;">发</span><span style="display:inline-block;width:5.9px;text-align:center;">电</span><span style="display:inline-block;width:5.9px;text-align:center;">参</span><span style="display:inline-block;width:5.9px;text-align:center;">量</span><span style="display:inline-block;width:5.9px;text-align:center;">统</span><span style="display:inline-block;width:5.9px;text-align:center;">计</span></div>
<div class="a" style="left:159.5px;top:154.42px;width:5.3px;height:0px;border-top:0.6px dotted #c0c0c0"></div>
<div class="a" style="left:165.0px;top:158.7px;width:6px;height:4.4px;background:#eeee74;border-right:0.9px solid #55552a;border-bottom:0.9px solid #55552a"></div>
<div class="a" style="left:165.0px;top:158.0px;width:2.6px;height:0.9px;background:#e4e070"></div>
<div class="t" style="left:173.3px;top:158.5px;font-size:5.5px;color:#111;width:62.9px;overflow:hidden"><span style="display:inline-block;width:3.0px;text-align:center;transform:scaleX(0.88);font-family:'Liberation Serif',serif;font-size:6.3px">0</span><span style="display:inline-block;width:3.0px;text-align:center;transform:scaleX(0.88);font-family:'Liberation Serif',serif;font-size:6.3px">.</span><span style="display:inline-block;width:3.0px;text-align:center;transform:scaleX(0.88);font-family:'Liberation Serif',serif;font-size:6.3px">4</span><span style="display:inline-block;width:3.0px;text-align:center;transform:scaleX(0.88);font-family:'Liberation Serif',serif;font-size:6.3px">k</span><span style="display:inline-block;width:3.0px;text-align:center;transform:scaleX(0.88);font-family:'Liberation Serif',serif;font-size:6.3px">V</span><span style="display:inline-block;width:5.9px;text-align:center;">电</span><span style="display:inline-block;width:5.9px;text-align:center;">参</span><span style="display:inline-block;width:5.9px;text-align:center;">量</span><span style="display:inline-block;width:5.9px;text-align:center;">统</span><span style="display:inline-block;width:5.9px;text-align:center;">计</span><span style="display:inline-block;width:5.9px;text-align:center;">报</span><span style="display:inline-block;width:5.9px;text-align:center;">表</span></div>
<div class="a" style="left:159.5px;top:161.3px;width:5.3px;height:0px;border-top:0.6px dotted #c0c0c0"></div>
<div class="a" style="left:151.8px;top:96px;width:0px;height:37px;border-left:0.6px dotted #c8c8c8"></div>
<div class="a" style="left:159.5px;top:101.5px;width:0px;height:24px;border-left:0.6px dotted #c8c8c8"></div>
<div class="a" style="left:159.5px;top:135.5px;width:0px;height:25.5px;border-left:0.6px dotted #c8c8c8"></div>
<div class="a" style="left:148px;top:181.3px;width:89px;height:6.5px;background:#f0f0f0"></div>
<div class="a" style="left:154.9px;top:182.4px;width:59.6px;height:4.3px;background:#cdcdcd"></div>
<svg class="a" style="left:148px;top:181px" width="89" height="7" viewBox="0 0 89 7"><g stroke="#505050" stroke-width="0.9" fill="none"><path d="M4.6 1.8 L2.9 3.5 L4.6 5.2"/><path d="M84.6 1.8 L86.3 3.5 L84.6 5.2"/></g></svg>
<div class="t" style="left:152.9px;top:201px;font-size:5.8px;color:#111;font-weight:bold">起始时间：</div>
<div class="a" style="left:181.9px;top:199.3px;width:42.4px;height:8.6px;background:#fff;border-top:1px solid #6a6a6a;border-left:1px solid #6a6a6a;border-bottom:1px solid #f8f8f8;border-right:1px solid #f8f8f8"></div>
<div class="t" style="left:183.6px;top:201.20000000000002px;font-size:5.9px;color:#202020"><span style="display:inline-block;width:3.0px;text-align:center;font-family:'Liberation Mono',monospace">2</span><span style="display:inline-block;width:3.0px;text-align:center;font-family:'Liberation Mono',monospace">0</span><span style="display:inline-block;width:3.0px;text-align:center;font-family:'Liberation Mono',monospace">2</span><span style="display:inline-block;width:3.0px;text-align:center;font-family:'Liberation Mono',monospace">2</span><span style="display:inline-block;width:3.0px;text-align:center;font-family:'Liberation Mono',monospace">/</span><span style="display:inline-block;width:3.0px;text-align:center;font-family:'Liberation Mono',monospace">&nbsp;</span><span style="display:inline-block;width:3.0px;text-align:center;font-family:'Liberation Mono',monospace">7</span><span style="display:inline-block;width:3.0px;text-align:center;font-family:'Liberation Mono',monospace">/</span><span style="display:inline-block;width:3.0px;text-align:center;font-family:'Liberation Mono',monospace">&nbsp;</span><span style="display:inline-block;width:3.0px;text-align:center;font-family:'Liberation Mono',monospace">6</span></div>
<div class="a" style="left:216.7px;top:200.20000000000002px;width:7px;height:6.8px;background:#fff;border-right:0.8px solid #6a6a6a;border-bottom:0.8px solid #6a6a6a"></div>
<div class="a" style="left:218.6px;top:202.6px;width:0;height:0;border-left:1.9px solid transparent;border-right:1.9px solid transparent;border-top:2.3px solid #111"></div>
<div class="a" style="left:181.9px;top:210.0px;width:42.4px;height:8.6px;background:#fff;border-top:1px solid #6a6a6a;border-left:1px solid #6a6a6a;border-bottom:1px solid #f8f8f8;border-right:1px solid #f8f8f8"></div>
<div class="t" style="left:183.6px;top:211.9px;font-size:5.9px;color:#202020"><span style="display:inline-block;width:3.15px;text-align:center;font-family:'Liberation Mono',monospace">2</span><span style="display:inline-block;width:3.15px;text-align:center;font-family:'Liberation Mono',monospace">3</span><span style="display:inline-block;width:3.15px;text-align:center;font-family:'Liberation Mono',monospace">:</span><span style="display:inline-block;width:3.15px;text-align:center;font-family:'Liberation Mono',monospace">5</span><span style="display:inline-block;width:3.15px;text-align:center;font-family:'Liberation Mono',monospace">1</span><span style="display:inline-block;width:3.15px;text-align:center;font-family:'Liberation Mono',monospace">:</span><span style="display:inline-block;width:3.15px;text-align:center;font-family:'Liberation Mono',monospace">3</span><span style="display:inline-block;width:3.15px;text-align:center;font-family:'Liberation Mono',monospace">7</span></div>
<div class="a" style="left:216.7px;top:210.9px;width:7px;height:3.3px;background:#f4f4f4;border-bottom:0.8px solid #6a6a6a"></div>
<div class="a" style="left:216.7px;top:214.2px;width:7px;height:3.5px;background:#f4f4f4;border-bottom:0.8px solid #a0a0a0"></div>
<div class="a" style="left:219.6px;top:212.2px;width:1px;height:1px;background:#202020"></div>
<div class="a" style="left:219.6px;top:215.8px;width:1px;height:1px;background:#202020"></div>
<div class="t" style="left:152.9px;top:224.7px;font-size:5.8px;color:#a8a8a8;font-weight:bold">结束时间：</div>
<div class="a" style="left:181.9px;top:222.4px;width:42.4px;height:8.6px;background:#f0f0f0;border-top:1px solid #6a6a6a;border-left:1px solid #6a6a6a;border-bottom:1px solid #f8f8f8;border-right:1px solid #f8f8f8"></div>
<div class="t" style="left:183.6px;top:224.3px;font-size:5.9px;color:#9a9a9a"><span style="display:inline-block;width:3.0px;text-align:center;font-family:'Liberation Mono',monospace">2</span><span style="display:inline-block;width:3.0px;text-align:center;font-family:'Liberation Mono',monospace">0</span><span style="display:inline-block;width:3.0px;text-align:center;font-family:'Liberation Mono',monospace">2</span><span style="display:inline-block;width:3.0px;text-align:center;font-family:'Liberation Mono',monospace">2</span><span style="display:inline-block;width:3.0px;text-align:center;font-family:'Liberation Mono',monospace">/</span><span style="display:inline-block;width:3.0px;text-align:center;font-family:'Liberation Mono',monospace">&nbsp;</span><span style="display:inline-block;width:3.0px;text-align:center;font-family:'Liberation Mono',monospace">7</span><span style="display:inline-block;width:3.0px;text-align:center;font-family:'Liberation Mono',monospace">/</span><span style="display:inline-block;width:3.0px;text-align:center;font-family:'Liberation Mono',monospace">&nbsp;</span><span style="display:inline-block;width:3.0px;text-align:center;font-family:'Liberation Mono',monospace">6</span></div>
<div class="a" style="left:216.7px;top:223.3px;width:7px;height:6.8px;background:#f0f0f0;border-right:0.8px solid #6a6a6a;border-bottom:0.8px solid #6a6a6a"></div>
<div class="a" style="left:218.6px;top:225.7px;width:0;height:0;border-left:1.9px solid transparent;border-right:1.9px solid transparent;border-top:2.3px solid #9a9a9a"></div>
<div class="a" style="left:181.9px;top:233.2px;width:42.4px;height:8.6px;background:#f0f0f0;border-top:1px solid #6a6a6a;border-left:1px solid #6a6a6a;border-bottom:1px solid #f8f8f8;border-right:1px solid #f8f8f8"></div>
<div class="t" style="left:183.6px;top:235.1px;font-size:5.9px;color:#9a9a9a"><span style="display:inline-block;width:3.15px;text-align:center;font-family:'Liberation Mono',monospace">2</span><span style="display:inline-block;width:3.15px;text-align:center;font-family:'Liberation Mono',monospace">3</span><span style="display:inline-block;width:3.15px;text-align:center;font-family:'Liberation Mono',monospace">:</span><span style="display:inline-block;width:3.15px;text-align:center;font-family:'Liberation Mono',monospace">5</span><span style="display:inline-block;width:3.15px;text-align:center;font-family:'Liberation Mono',monospace">1</span><span style="display:inline-block;width:3.15px;text-align:center;font-family:'Liberation Mono',monospace">:</span><span style="display:inline-block;width:3.15px;text-align:center;font-family:'Liberation Mono',monospace">3</span><span style="display:inline-block;width:3.15px;text-align:center;font-family:'Liberation Mono',monospace">7</span></div>
<div class="a" style="left:216.7px;top:234.1px;width:7px;height:3.3px;background:#f4f4f4;border-bottom:0.8px solid #6a6a6a"></div>
<div class="a" style="left:216.7px;top:237.39999999999998px;width:7px;height:3.5px;background:#f4f4f4;border-bottom:0.8px solid #a0a0a0"></div>
<div class="a" style="left:219.6px;top:235.39999999999998px;width:1px;height:1px;background:#9a9a9a"></div>
<div class="a" style="left:219.6px;top:239.0px;width:1px;height:1px;background:#9a9a9a"></div>
<div class="a" style="left:157.2px;top:251.2px;width:30.3px;height:9.3px;background:#e6e6e6;border-top:0.8px solid #fcfcfc;border-left:0.8px solid #fcfcfc;border-bottom:0.8px solid #a8a8a8;border-right:0.8px solid #a8a8a8"></div>
<div class="t" style="left:157.2px;top:253.2px;width:30.3px;text-align:center;font-size:5.6px;color:#1a1a1a">查询</div>
<div class="a" style="left:192.7px;top:251.2px;width:30.3px;height:9.3px;background:#e6e6e6;border-top:0.8px solid #fcfcfc;border-left:0.8px solid #fcfcfc;border-bottom:0.8px solid #a8a8a8;border-right:0.8px solid #a8a8a8"></div>
<div class="t" style="left:192.7px;top:253.2px;width:30.3px;text-align:center;font-size:5.6px;color:#1a1a1a">导出</div>
<div class="a" style="left:157.2px;top:264px;width:30.3px;height:9.3px;background:#e6e6e6;border-top:0.8px solid #fcfcfc;border-left:0.8px solid #fcfcfc;border-bottom:0.8px solid #a8a8a8;border-right:0.8px solid #a8a8a8"></div>
<div class="t" style="left:157.2px;top:266px;width:30.3px;text-align:center;font-size:5.6px;color:#1a1a1a">打印</div>
<div class="a" style="left:192.7px;top:264px;width:30.3px;height:9.3px;background:#e6e6e6;border-top:0.8px solid #fcfcfc;border-left:0.8px solid #fcfcfc;border-bottom:0.8px solid #a8a8a8;border-right:0.8px solid #a8a8a8"></div>
<div class="t" style="left:192.7px;top:266px;width:30.3px;text-align:center;font-size:5.6px;color:#1a1a1a">退出</div>
<div class="a" style="left:237px;top:85.3px;width:438.5px;height:306.3px;background:#f0ffff;border-left:1px solid #6e6e6e"></div>
<div class="a" style="left:675.3px;top:85.3px;width:7.7px;height:306.3px;background:#f0f0f0"></div>
<div class="a" style="left:676.5px;top:93.9px;width:5.2px;height:32.2px;background:#cdcdcd"></div>
<div class="a" style="left:677.3px;top:88.6px;width:2.6px;height:2.6px;border-left:0.8px solid #606060;border-top:0.8px solid #606060;transform:rotate(45deg)"></div>
<div class="a" style="left:677.3px;top:385.4px;width:2.6px;height:2.6px;border-right:0.8px solid #606060;border-bottom:0.8px solid #606060;transform:rotate(45deg)"></div>
<div class="t" style="left:237.5px;top:87.8px;width:64.9px;text-align:center;font-size:5.4px;color:#3a3a3a">0</div>
<div class="t" style="left:302.4px;top:87.8px;width:101.2px;text-align:center;font-size:5.4px;color:#3a3a3a">1</div>
<div class="t" style="left:403.6px;top:87.8px;width:24.3px;text-align:center;font-size:5.4px;color:#3a3a3a">2</div>
<div class="t" style="left:427.9px;top:87.8px;width:24.3px;text-align:center;font-size:5.4px;color:#3a3a3a">3</div>
<div class="t" style="left:452.2px;top:87.8px;width:24.3px;text-align:center;font-size:5.4px;color:#3a3a3a">4</div>
<div class="t" style="left:476.5px;top:87.8px;width:24.1px;text-align:center;font-size:5.4px;color:#3a3a3a">5</div>
<div class="t" style="left:500.6px;top:87.8px;width:24.1px;text-align:center;font-size:5.4px;color:#3a3a3a">6</div>
<div class="t" style="left:524.7px;top:87.8px;width:24.2px;text-align:center;font-size:5.4px;color:#3a3a3a">7</div>
<div class="t" style="left:548.9px;top:87.8px;width:24.4px;text-align:center;font-size:5.4px;color:#3a3a3a">8</div>
<div class="t" style="left:573.3px;top:87.8px;width:27.7px;text-align:center;font-size:5.4px;color:#3a3a3a">9</div>
<div class="t" style="left:601.0px;top:87.8px;width:17.5px;text-align:center;font-size:5.4px;color:#3a3a3a">10</div>
<div class="t" style="left:618.5px;top:87.8px;width:23.7px;text-align:center;font-size:5.4px;color:#3a3a3a">11</div>
<div class="a" style="left:237.5px;top:121.8px;width:404.70000000000005px;height:11.5px;background:#dcffff"></div>
<div class="t" style="left:376.7px;top:98.6px;font-size:9.4px;font-weight:600;color:#1e1a10"><span style="display:inline-block;width:5.2px;text-align:center;transform:scaleX(0.88);font-family:'Liberation Serif',serif;font-size:10px">0</span><span style="display:inline-block;width:5.2px;text-align:center;transform:scaleX(0.88);font-family:'Liberation Serif',serif;font-size:10px">.</span><span style="display:inline-block;width:5.2px;text-align:center;transform:scaleX(0.88);font-family:'Liberation Serif',serif;font-size:10px">4</span><span style="display:inline-block;width:5.2px;text-align:center;transform:scaleX(0.88);font-family:'Liberation Serif',serif;font-size:10px">k</span><span style="display:inline-block;width:5.2px;text-align:center;transform:scaleX(0.88);font-family:'Liberation Serif',serif;font-size:10px">V</span><span style="display:inline-block;width:5.2px;text-align:center;transform:scaleX(0.88);font-family:'Liberation Serif',serif;font-size:10px">&nbsp;</span><span style="display:inline-block;width:5.2px;text-align:center;transform:scaleX(0.88);font-family:'Liberation Serif',serif;font-size:10px">T</span><span style="display:inline-block;width:5.2px;text-align:center;transform:scaleX(0.88);font-family:'Liberation Serif',serif;font-size:10px">1</span><span style="display:inline-block;width:5.2px;text-align:center;transform:scaleX(0.88);font-family:'Liberation Serif',serif;font-size:10px">-</span><span style="display:inline-block;width:5.2px;text-align:center;transform:scaleX(0.88);font-family:'Liberation Serif',serif;font-size:10px">T</span><span style="display:inline-block;width:5.2px;text-align:center;transform:scaleX(0.88);font-family:'Liberation Serif',serif;font-size:10px">4</span><span style="display:inline-block;width:9.63px;text-align:center;">电</span><span style="display:inline-block;width:9.63px;text-align:center;">参</span><span style="display:inline-block;width:9.63px;text-align:center;">量</span><span style="display:inline-block;width:9.63px;text-align:center;">统</span><span style="display:inline-block;width:9.63px;text-align:center;">计</span><span style="display:inline-block;width:9.63px;text-align:center;">报</span><span style="display:inline-block;width:9.63px;text-align:center;">表</span></div>
<div class="t" style="left:237.5px;top:113.3px;width:404.7px;text-align:center;font-size:5.6px;color:#222">报表日期：2022年07月06日23时51分</div>
<div class="t" style="left:237.5px;top:124.8px;width:64.9px;text-align:center;font-size:6.2px;font-weight:bold;color:#1a1a1a;letter-spacing:0.2px">位置</div>
<div class="t" style="left:302.4px;top:124.8px;width:101.2px;text-align:center;font-size:6.2px;font-weight:bold;color:#1a1a1a;letter-spacing:0.2px">名称</div>
<div class="t" style="left:407.25px;top:124.9px;font-size:6.4px;font-weight:bold;color:#1a1a1a"><span style="display:inline-block;width:3.4px;text-align:center;font-family:'Liberation Serif',serif">U</span><span style="display:inline-block;width:3.4px;text-align:center;font-family:'Liberation Serif',serif">a</span><span style="display:inline-block;width:3.4px;text-align:center;font-family:'Liberation Serif',serif">(</span><span style="display:inline-block;width:3.4px;text-align:center;font-family:'Liberation Serif',serif">V</span><span style="display:inline-block;width:3.4px;text-align:center;font-family:'Liberation Serif',serif">)</span></div>
<div class="t" style="left:431.55px;top:124.9px;font-size:6.4px;font-weight:bold;color:#1a1a1a"><span style="display:inline-block;width:3.4px;text-align:center;font-family:'Liberation Serif',serif">U</span><span style="display:inline-block;width:3.4px;text-align:center;font-family:'Liberation Serif',serif">b</span><span style="display:inline-block;width:3.4px;text-align:center;font-family:'Liberation Serif',serif">(</span><span style="display:inline-block;width:3.4px;text-align:center;font-family:'Liberation Serif',serif">V</span><span style="display:inline-block;width:3.4px;text-align:center;font-family:'Liberation Serif',serif">)</span></div>
<div class="t" style="left:455.85px;top:124.9px;font-size:6.4px;font-weight:bold;color:#1a1a1a"><span style="display:inline-block;width:3.4px;text-align:center;font-family:'Liberation Serif',serif">U</span><span style="display:inline-block;width:3.4px;text-align:center;font-family:'Liberation Serif',serif">c</span><span style="display:inline-block;width:3.4px;text-align:center;font-family:'Liberation Serif',serif">(</span><span style="display:inline-block;width:3.4px;text-align:center;font-family:'Liberation Serif',serif">V</span><span style="display:inline-block;width:3.4px;text-align:center;font-family:'Liberation Serif',serif">)</span></div>
<div class="t" style="left:480.05px;top:124.9px;font-size:6.4px;font-weight:bold;color:#1a1a1a"><span style="display:inline-block;width:3.4px;text-align:center;font-family:'Liberation Serif',serif">I</span><span style="display:inline-block;width:3.4px;text-align:center;font-family:'Liberation Serif',serif">a</span><span style="display:inline-block;width:3.4px;text-align:center;font-family:'Liberation Serif',serif">(</span><span style="display:inline-block;width:3.4px;text-align:center;font-family:'Liberation Serif',serif">A</span><span style="display:inline-block;width:3.4px;text-align:center;font-family:'Liberation Serif',serif">)</span></div>
<div class="t" style="left:504.15px;top:124.9px;font-size:6.4px;font-weight:bold;color:#1a1a1a"><span style="display:inline-block;width:3.4px;text-align:center;font-family:'Liberation Serif',serif">I</span><span style="display:inline-block;width:3.4px;text-align:center;font-family:'Liberation Serif',serif">b</span><span style="display:inline-block;width:3.4px;text-align:center;font-family:'Liberation Serif',serif">(</span><span style="display:inline-block;width:3.4px;text-align:center;font-family:'Liberation Serif',serif">A</span><span style="display:inline-block;width:3.4px;text-align:center;font-family:'Liberation Serif',serif">)</span></div>
<div class="t" style="left:528.3px;top:124.9px;font-size:6.4px;font-weight:bold;color:#1a1a1a"><span style="display:inline-block;width:3.4px;text-align:center;font-family:'Liberation Serif',serif">I</span><span style="display:inline-block;width:3.4px;text-align:center;font-family:'Liberation Serif',serif">c</span><span style="display:inline-block;width:3.4px;text-align:center;font-family:'Liberation Serif',serif">(</span><span style="display:inline-block;width:3.4px;text-align:center;font-family:'Liberation Serif',serif">A</span><span style="display:inline-block;width:3.4px;text-align:center;font-family:'Liberation Serif',serif">)</span></div>
<div class="t" style="left:552.6px;top:124.9px;font-size:6.4px;font-weight:bold;color:#1a1a1a"><span style="display:inline-block;width:3.4px;text-align:center;font-family:'Liberation Serif',serif">P</span><span style="display:inline-block;width:3.4px;text-align:center;font-family:'Liberation Serif',serif">(</span><span style="display:inline-block;width:3.4px;text-align:center;font-family:'Liberation Serif',serif">K</span><span style="display:inline-block;width:3.4px;text-align:center;font-family:'Liberation Serif',serif">W</span><span style="display:inline-block;width:3.4px;text-align:center;font-family:'Liberation Serif',serif">)</span></div>
<div class="t" style="left:576.95px;top:124.9px;font-size:6.4px;font-weight:bold;color:#1a1a1a"><span style="display:inline-block;width:3.4px;text-align:center;font-family:'Liberation Serif',serif">Q</span><span style="display:inline-block;width:3.4px;text-align:center;font-family:'Liberation Serif',serif">(</span><span style="display:inline-block;width:3.4px;text-align:center;font-family:'Liberation Serif',serif">K</span><span style="display:inline-block;width:3.4px;text-align:center;font-family:'Liberation Serif',serif">V</span><span style="display:inline-block;width:3.4px;text-align:center;font-family:'Liberation Serif',serif">A</span><span style="display:inline-block;width:3.4px;text-align:center;font-family:'Liberation Serif',serif">)</span></div>
<div class="t" style="left:604.65px;top:124.9px;font-size:6.4px;font-weight:bold;color:#1a1a1a"><span style="display:inline-block;width:3.4px;text-align:center;font-family:'Liberation Serif',serif">C</span><span style="display:inline-block;width:3.4px;text-align:center;font-family:'Liberation Serif',serif">O</span><span style="display:inline-block;width:3.4px;text-align:center;font-family:'Liberation Serif',serif">S</span></div>
<div class="t" style="left:621.85px;top:124.9px;font-size:6.4px;font-weight:bold;color:#1a1a1a"><span style="display:inline-block;width:3.4px;text-align:center;font-family:'Liberation Serif',serif">F</span><span style="display:inline-block;width:3.4px;text-align:center;font-family:'Liberation Serif',serif">(</span><span style="display:inline-block;width:3.4px;text-align:center;font-family:'Liberation Serif',serif">H</span><span style="display:inline-block;width:3.4px;text-align:center;font-family:'Liberation Serif',serif">z</span><span style="display:inline-block;width:3.4px;text-align:center;font-family:'Liberation Serif',serif">)</span></div>
<div class="a" style="left:302.4px;top:133.6px;width:339.80000000000007px;height:9.51px;background:#fffde0"></div>
<div class="t" style="left:302.4px;top:136.2px;width:101.2px;text-align:center;font-size:5.6px;color:#3c3c3c;letter-spacing:-0.15px">L1-1-1 进线柜</div>
<div class="t" style="left:403.6px;top:136.2px;width:24.3px;text-align:center;font-size:5.8px;color:#3c3cec;-webkit-text-stroke:0.08px #3c3cec">0.00</div>
<div class="t" style="left:427.9px;top:136.2px;width:24.3px;text-align:center;font-size:5.8px;color:#3c3cec;-webkit-text-stroke:0.08px #3c3cec">0.00</div>
<div class="t" style="left:452.2px;top:136.2px;width:24.3px;text-align:center;font-size:5.8px;color:#3c3cec;-webkit-text-stroke:0.08px #3c3cec">0.00</div>
<div class="t" style="left:476.5px;top:136.2px;width:24.1px;text-align:center;font-size:5.8px;color:#3c3cec;-webkit-text-stroke:0.08px #3c3cec">0.00</div>
<div class="t" style="left:500.6px;top:136.2px;width:24.1px;text-align:center;font-size:5.8px;color:#3c3cec;-webkit-text-stroke:0.08px #3c3cec">0.00</div>
<div class="t" style="left:524.7px;top:136.2px;width:24.2px;text-align:center;font-size:5.8px;color:#3c3cec;-webkit-text-stroke:0.08px #3c3cec">0.00</div>
<div class="t" style="left:548.9px;top:136.2px;width:24.4px;text-align:center;font-size:5.8px;color:#3c3cec;-webkit-text-stroke:0.08px #3c3cec">0.00</div>
<div class="t" style="left:573.3px;top:136.2px;width:27.7px;text-align:center;font-size:5.8px;color:#3c3cec;-webkit-text-stroke:0.08px #3c3cec">0.00</div>
<div class="t" style="left:601.0px;top:136.2px;width:17.5px;text-align:center;font-size:5.8px;color:#3c3cec;-webkit-text-stroke:0.08px #3c3cec">0.00</div>
<div class="t" style="left:618.5px;top:136.2px;width:23.7px;text-align:center;font-size:5.8px;color:#3c3cec;-webkit-text-stroke:0.08px #3c3cec">0.00</div>
<div class="a" style="left:302.4px;top:143.11px;width:339.80000000000007px;height:9.51px;background:#e6e6e6"></div>
<div class="t" style="left:302.4px;top:145.71px;width:101.2px;text-align:center;font-size:5.6px;color:#3c3c3c;letter-spacing:-0.15px">L1-2-1 电容柜1</div>
<div class="t" style="left:403.6px;top:145.71px;width:24.3px;text-align:center;font-size:5.8px;color:#3c3cec;-webkit-text-stroke:0.08px #3c3cec">0.00</div>
<div class="t" style="left:427.9px;top:145.71px;width:24.3px;text-align:center;font-size:5.8px;color:#3c3cec;-webkit-text-stroke:0.08px #3c3cec">0.00</div>
<div class="t" style="left:452.2px;top:145.71px;width:24.3px;text-align:center;font-size:5.8px;color:#3c3cec;-webkit-text-stroke:0.08px #3c3cec">0.00</div>
<div class="t" style="left:476.5px;top:145.71px;width:24.1px;text-align:center;font-size:5.8px;color:#3c3cec;-webkit-text-stroke:0.08px #3c3cec">0.00</div>
<div class="t" style="left:500.6px;top:145.71px;width:24.1px;text-align:center;font-size:5.8px;color:#3c3cec;-webkit-text-stroke:0.08px #3c3cec">0.00</div>
<div class="t" style="left:524.7px;top:145.71px;width:24.2px;text-align:center;font-size:5.8px;color:#3c3cec;-webkit-text-stroke:0.08px #3c3cec">0.00</div>
<div class="t" style="left:548.9px;top:145.71px;width:24.4px;text-align:center;font-size:5.8px;color:#3c3cec;-webkit-text-stroke:0.08px #3c3cec">0.00</div>
<div class="t" style="left:573.3px;top:145.71px;width:27.7px;text-align:center;font-size:5.8px;color:#3c3cec;-webkit-text-stroke:0.08px #3c3cec">0.00</div>
<div class="t" style="left:601.0px;top:145.71px;width:17.5px;text-align:center;font-size:5.8px;color:#3c3cec;-webkit-text-stroke:0.08px #3c3cec">0.00</div>
<div class="t" style="left:618.5px;top:145.71px;width:23.7px;text-align:center;font-size:5.8px;color:#3c3cec;-webkit-text-stroke:0.08px #3c3cec">0.00</div>
<div class="a" style="left:302.4px;top:152.62px;width:339.80000000000007px;height:9.51px;background:#fffde0"></div>
<div class="t" style="left:302.4px;top:155.22px;width:101.2px;text-align:center;font-size:5.6px;color:#3c3c3c;letter-spacing:-0.15px">L1-3-1 电容柜2</div>
<div class="t" style="left:403.6px;top:155.22px;width:24.3px;text-align:center;font-size:5.8px;color:#3c3cec;-webkit-text-stroke:0.08px #3c3cec">0.00</div>
<div class="t" style="left:427.9px;top:155.22px;width:24.3px;text-align:center;font-size:5.8px;color:#3c3cec;-webkit-text-stroke:0.08px #3c3cec">0.00</div>
<div class="t" style="left:452.2px;top:155.22px;width:24.3px;text-align:center;font-size:5.8px;color:#3c3cec;-webkit-text-stroke:0.08px #3c3cec">0.00</div>
<div class="t" style="left:476.5px;top:155.22px;width:24.1px;text-align:center;font-size:5.8px;color:#3c3cec;-webkit-text-stroke:0.08px #3c3cec">0.00</div>
<div class="t" style="left:500.6px;top:155.22px;width:24.1px;text-align:center;font-size:5.8px;color:#3c3cec;-webkit-text-stroke:0.08px #3c3cec">0.00</div>
<div class="t" style="left:524.7px;top:155.22px;width:24.2px;text-align:center;font-size:5.8px;color:#3c3cec;-webkit-text-stroke:0.08px #3c3cec">0.00</div>
<div class="t" style="left:548.9px;top:155.22px;width:24.4px;text-align:center;font-size:5.8px;color:#3c3cec;-webkit-text-stroke:0.08px #3c3cec">0.00</div>
<div class="t" style="left:573.3px;top:155.22px;width:27.7px;text-align:center;font-size:5.8px;color:#3c3cec;-webkit-text-stroke:0.08px #3c3cec">0.00</div>
<div class="t" style="left:601.0px;top:155.22px;width:17.5px;text-align:center;font-size:5.8px;color:#3c3cec;-webkit-text-stroke:0.08px #3c3cec">0.00</div>
<div class="t" style="left:618.5px;top:155.22px;width:23.7px;text-align:center;font-size:5.8px;color:#3c3cec;-webkit-text-stroke:0.08px #3c3cec">0.00</div>
<div class="a" style="left:302.4px;top:162.13px;width:339.80000000000007px;height:9.51px;background:#e6e6e6"></div>
<div class="t" style="left:302.4px;top:164.73px;width:101.2px;text-align:center;font-size:5.6px;color:#3c3c3c;letter-spacing:-0.15px">L1-4-1 冷冻机组B1LD1</div>
<div class="t" style="left:403.6px;top:164.73px;width:24.3px;text-align:center;font-size:5.8px;color:#3c3cec;-webkit-text-stroke:0.08px #3c3cec">0.00</div>
<div class="t" style="left:427.9px;top:164.73px;width:24.3px;text-align:center;font-size:5.8px;color:#3c3cec;-webkit-text-stroke:0.08px #3c3cec">0.00</div>
<div class="t" style="left:452.2px;top:164.73px;width:24.3px;text-align:center;font-size:5.8px;color:#3c3cec;-webkit-text-stroke:0.08px #3c3cec">0.00</div>
<div class="t" style="left:476.5px;top:164.73px;width:24.1px;text-align:center;font-size:5.8px;color:#3c3cec;-webkit-text-stroke:0.08px #3c3cec">0.00</div>
<div class="t" style="left:500.6px;top:164.73px;width:24.1px;text-align:center;font-size:5.8px;color:#3c3cec;-webkit-text-stroke:0.08px #3c3cec">0.00</div>
<div class="t" style="left:524.7px;top:164.73px;width:24.2px;text-align:center;font-size:5.8px;color:#3c3cec;-webkit-text-stroke:0.08px #3c3cec">0.00</div>
<div class="t" style="left:548.9px;top:164.73px;width:24.4px;text-align:center;font-size:5.8px;color:#3c3cec;-webkit-text-stroke:0.08px #3c3cec">0.00</div>
<div class="t" style="left:573.3px;top:164.73px;width:27.7px;text-align:center;font-size:5.8px;color:#3c3cec;-webkit-text-stroke:0.08px #3c3cec">0.00</div>
<div class="t" style="left:601.0px;top:164.73px;width:17.5px;text-align:center;font-size:5.8px;color:#3c3cec;-webkit-text-stroke:0.08px #3c3cec">0.00</div>
<div class="t" style="left:618.5px;top:164.73px;width:23.7px;text-align:center;font-size:5.8px;color:#3c3cec;-webkit-text-stroke:0.08px #3c3cec">0.00</div>
<div class="a" style="left:302.4px;top:171.64px;width:339.80000000000007px;height:9.51px;background:#fffde0"></div>
<div class="t" style="left:302.4px;top:174.24px;width:101.2px;text-align:center;font-size:5.6px;color:#3c3c3c;letter-spacing:-0.15px">L1-4-2 室外用电预留A-1EXL1</div>
<div class="t" style="left:403.6px;top:174.24px;width:24.3px;text-align:center;font-size:5.8px;color:#3c3cec;-webkit-text-stroke:0.08px #3c3cec">0.00</div>
<div class="t" style="left:427.9px;top:174.24px;width:24.3px;text-align:center;font-size:5.8px;color:#3c3cec;-webkit-text-stroke:0.08px #3c3cec">0.00</div>
<div class="t" style="left:452.2px;top:174.24px;width:24.3px;text-align:center;font-size:5.8px;color:#3c3cec;-webkit-text-stroke:0.08px #3c3cec">0.00</div>
<div class="t" style="left:476.5px;top:174.24px;width:24.1px;text-align:center;font-size:5.8px;color:#3c3cec;-webkit-text-stroke:0.08px #3c3cec">0.00</div>
<div class="t" style="left:500.6px;top:174.24px;width:24.1px;text-align:center;font-size:5.8px;color:#3c3cec;-webkit-text-stroke:0.08px #3c3cec">0.00</div>
<div class="t" style="left:524.7px;top:174.24px;width:24.2px;text-align:center;font-size:5.8px;color:#3c3cec;-webkit-text-stroke:0.08px #3c3cec">0.00</div>
<div class="t" style="left:548.9px;top:174.24px;width:24.4px;text-align:center;font-size:5.8px;color:#3c3cec;-webkit-text-stroke:0.08px #3c3cec">0.00</div>
<div class="t" style="left:573.3px;top:174.24px;width:27.7px;text-align:center;font-size:5.8px;color:#3c3cec;-webkit-text-stroke:0.08px #3c3cec">0.00</div>
<div class="t" style="left:601.0px;top:174.24px;width:17.5px;text-align:center;font-size:5.8px;color:#3c3cec;-webkit-text-stroke:0.08px #3c3cec">0.00</div>
<div class="t" style="left:618.5px;top:174.24px;width:23.7px;text-align:center;font-size:5.8px;color:#3c3cec;-webkit-text-stroke:0.08px #3c3cec">0.00</div>
<div class="a" style="left:302.4px;top:181.15px;width:339.80000000000007px;height:9.51px;background:#e6e6e6"></div>
<div class="t" style="left:302.4px;top:183.75px;width:101.2px;text-align:center;font-size:5.6px;color:#3c3c3c;letter-spacing:-0.15px">L1-4-3 室外用电预留A-1EXL2</div>
<div class="t" style="left:403.6px;top:183.75px;width:24.3px;text-align:center;font-size:5.8px;color:#3c3cec;-webkit-text-stroke:0.08px #3c3cec">0.00</div>
<div class="t" style="left:427.9px;top:183.75px;width:24.3px;text-align:center;font-size:5.8px;color:#3c3cec;-webkit-text-stroke:0.08px #3c3cec">0.00</div>
<div class="t" style="left:452.2px;top:183.75px;width:24.3px;text-align:center;font-size:5.8px;color:#3c3cec;-webkit-text-stroke:0.08px #3c3cec">0.00</div>
<div class="t" style="left:476.5px;top:183.75px;width:24.1px;text-align:center;font-size:5.8px;color:#3c3cec;-webkit-text-stroke:0.08px #3c3cec">0.00</div>
<div class="t" style="left:500.6px;top:183.75px;width:24.1px;text-align:center;font-size:5.8px;color:#3c3cec;-webkit-text-stroke:0.08px #3c3cec">0.00</div>
<div class="t" style="left:524.7px;top:183.75px;width:24.2px;text-align:center;font-size:5.8px;color:#3c3cec;-webkit-text-stroke:0.08px #3c3cec">0.00</div>
<div class="t" style="left:548.9px;top:183.75px;width:24.4px;text-align:center;font-size:5.8px;color:#3c3cec;-webkit-text-stroke:0.08px #3c3cec">0.00</div>
<div class="t" style="left:573.3px;top:183.75px;width:27.7px;text-align:center;font-size:5.8px;color:#3c3cec;-webkit-text-stroke:0.08px #3c3cec">0.00</div>
<div class="t" style="left:601.0px;top:183.75px;width:17.5px;text-align:center;font-size:5.8px;color:#3c3cec;-webkit-text-stroke:0.08px #3c3cec">0.00</div>
<div class="t" style="left:618.5px;top:183.75px;width:23.7px;text-align:center;font-size:5.8px;color:#3c3cec;-webkit-text-stroke:0.08px #3c3cec">0.00</div>
<div class="a" style="left:302.4px;top:190.66px;width:339.80000000000007px;height:9.51px;background:#fffde0"></div>
<div class="t" style="left:302.4px;top:193.26px;width:101.2px;text-align:center;font-size:5.6px;color:#3c3c3c;letter-spacing:-0.15px">L1-4-4 备用</div>
<div class="t" style="left:403.6px;top:193.26px;width:24.3px;text-align:center;font-size:5.8px;color:#3c3cec;-webkit-text-stroke:0.08px #3c3cec">0.00</div>
<div class="t" style="left:427.9px;top:193.26px;width:24.3px;text-align:center;font-size:5.8px;color:#3c3cec;-webkit-text-stroke:0.08px #3c3cec">0.00</div>
<div class="t" style="left:452.2px;top:193.26px;width:24.3px;text-align:center;font-size:5.8px;color:#3c3cec;-webkit-text-stroke:0.08px #3c3cec">0.00</div>
<div class="t" style="left:476.5px;top:193.26px;width:24.1px;text-align:center;font-size:5.8px;color:#3c3cec;-webkit-text-stroke:0.08px #3c3cec">0.00</div>
<div class="t" style="left:500.6px;top:193.26px;width:24.1px;text-align:center;font-size:5.8px;color:#3c3cec;-webkit-text-stroke:0.08px #3c3cec">0.00</div>
<div class="t" style="left:524.7px;top:193.26px;width:24.2px;text-align:center;font-size:5.8px;color:#3c3cec;-webkit-text-stroke:0.08px #3c3cec">0.00</div>
<div class="t" style="left:548.9px;top:193.26px;width:24.4px;text-align:center;font-size:5.8px;color:#3c3cec;-webkit-text-stroke:0.08px #3c3cec">0.00</div>
<div class="t" style="left:573.3px;top:193.26px;width:27.7px;text-align:center;font-size:5.8px;color:#3c3cec;-webkit-text-stroke:0.08px #3c3cec">0.00</div>
<div class="t" style="left:601.0px;top:193.26px;width:17.5px;text-align:center;font-size:5.8px;color:#3c3cec;-webkit-text-stroke:0.08px #3c3cec">0.00</div>
<div class="t" style="left:618.5px;top:193.26px;width:23.7px;text-align:center;font-size:5.8px;color:#3c3cec;-webkit-text-stroke:0.08px #3c3cec">0.00</div>
<div class="a" style="left:302.4px;top:200.17px;width:339.80000000000007px;height:9.51px;background:#e6e6e6"></div>
<div class="t" style="left:302.4px;top:202.77px;width:101.2px;text-align:center;font-size:5.6px;color:#3c3c3c;letter-spacing:-0.15px">L1-4-5 备用</div>
<div class="t" style="left:403.6px;top:202.77px;width:24.3px;text-align:center;font-size:5.8px;color:#3c3cec;-webkit-text-stroke:0.08px #3c3cec">0.00</div>
<div class="t" style="left:427.9px;top:202.77px;width:24.3px;text-align:center;font-size:5.8px;color:#3c3cec;-webkit-text-stroke:0.08px #3c3cec">0.00</div>
<div class="t" style="left:452.2px;top:202.77px;width:24.3px;text-align:center;font-size:5.8px;color:#3c3cec;-webkit-text-stroke:0.08px #3c3cec">0.00</div>
<div class="t" style="left:476.5px;top:202.77px;width:24.1px;text-align:center;font-size:5.8px;color:#3c3cec;-webkit-text-stroke:0.08px #3c3cec">0.00</div>
<div class="t" style="left:500.6px;top:202.77px;width:24.1px;text-align:center;font-size:5.8px;color:#3c3cec;-webkit-text-stroke:0.08px #3c3cec">0.00</div>
<div class="t" style="left:524.7px;top:202.77px;width:24.2px;text-align:center;font-size:5.8px;color:#3c3cec;-webkit-text-stroke:0.08px #3c3cec">0.00</div>
<div class="t" style="left:548.9px;top:202.77px;width:24.4px;text-align:center;font-size:5.8px;color:#3c3cec;-webkit-text-stroke:0.08px #3c3cec">0.00</div>
<div class="t" style="left:573.3px;top:202.77px;width:27.7px;text-align:center;font-size:5.8px;color:#3c3cec;-webkit-text-stroke:0.08px #3c3cec">0.00</div>
<div class="t" style="left:601.0px;top:202.77px;width:17.5px;text-align:center;font-size:5.8px;color:#3c3cec;-webkit-text-stroke:0.08px #3c3cec">0.00</div>
<div class="t" style="left:618.5px;top:202.77px;width:23.7px;text-align:center;font-size:5.8px;color:#3c3cec;-webkit-text-stroke:0.08px #3c3cec">0.00</div>
<div class="a" style="left:302.4px;top:209.68px;width:339.80000000000007px;height:9.51px;background:#fffde0"></div>
<div class="t" style="left:302.4px;top:212.28px;width:101.2px;text-align:center;font-size:5.6px;color:#3c3c3c;letter-spacing:-0.15px">L1-5-1 冷冻机组B1LD2</div>
<div class="t" style="left:403.6px;top:212.28px;width:24.3px;text-align:center;font-size:5.8px;color:#3c3cec;-webkit-text-stroke:0.08px #3c3cec">0.00</div>
<div class="t" style="left:427.9px;top:212.28px;width:24.3px;text-align:center;font-size:5.8px;color:#3c3cec;-webkit-text-stroke:0.08px #3c3cec">0.00</div>
<div class="t" style="left:452.2px;top:212.28px;width:24.3px;text-align:center;font-size:5.8px;color:#3c3cec;-webkit-text-stroke:0.08px #3c3cec">0.00</div>
<div class="t" style="left:476.5px;top:212.28px;width:24.1px;text-align:center;font-size:5.8px;color:#3c3cec;-webkit-text-stroke:0.08px #3c3cec">0.00</div>
<div class="t" style="left:500.6px;top:212.28px;width:24.1px;text-align:center;font-size:5.8px;color:#3c3cec;-webkit-text-stroke:0.08px #3c3cec">0.00</div>
<div class="t" style="left:524.7px;top:212.28px;width:24.2px;text-align:center;font-size:5.8px;color:#3c3cec;-webkit-text-stroke:0.08px #3c3cec">0.00</div>
<div class="t" style="left:548.9px;top:212.28px;width:24.4px;text-align:center;font-size:5.8px;color:#3c3cec;-webkit-text-stroke:0.08px #3c3cec">0.00</div>
<div class="t" style="left:573.3px;top:212.28px;width:27.7px;text-align:center;font-size:5.8px;color:#3c3cec;-webkit-text-stroke:0.08px #3c3cec">0.00</div>
<div class="t" style="left:601.0px;top:212.28px;width:17.5px;text-align:center;font-size:5.8px;color:#3c3cec;-webkit-text-stroke:0.08px #3c3cec">0.00</div>
<div class="t" style="left:618.5px;top:212.28px;width:23.7px;text-align:center;font-size:5.8px;color:#3c3cec;-webkit-text-stroke:0.08px #3c3cec">0.00</div>
<div class="a" style="left:302.4px;top:219.19px;width:339.80000000000007px;height:9.51px;background:#e6e6e6"></div>
<div class="t" style="left:302.4px;top:221.79px;width:101.2px;text-align:center;font-size:5.6px;color:#3c3c3c;letter-spacing:-0.15px">L1-5-2 室外用电预留A-1EXL3</div>
<div class="t" style="left:403.6px;top:221.79px;width:24.3px;text-align:center;font-size:5.8px;color:#3c3cec;-webkit-text-stroke:0.08px #3c3cec">0.00</div>
<div class="t" style="left:427.9px;top:221.79px;width:24.3px;text-align:center;font-size:5.8px;color:#3c3cec;-webkit-text-stroke:0.08px #3c3cec">0.00</div>
<div class="t" style="left:452.2px;top:221.79px;width:24.3px;text-align:center;font-size:5.8px;color:#3c3cec;-webkit-text-stroke:0.08px #3c3cec">0.00</div>
<div class="t" style="left:476.5px;top:221.79px;width:24.1px;text-align:center;font-size:5.8px;color:#3c3cec;-webkit-text-stroke:0.08px #3c3cec">0.00</div>
<div class="t" style="left:500.6px;top:221.79px;width:24.1px;text-align:center;font-size:5.8px;color:#3c3cec;-webkit-text-stroke:0.08px #3c3cec">0.00</div>
<div class="t" style="left:524.7px;top:221.79px;width:24.2px;text-align:center;font-size:5.8px;color:#3c3cec;-webkit-text-stroke:0.08px #3c3cec">0.00</div>
<div class="t" style="left:548.9px;top:221.79px;width:24.4px;text-align:center;font-size:5.8px;color:#3c3cec;-webkit-text-stroke:0.08px #3c3cec">0.00</div>
<div class="t" style="left:573.3px;top:221.79px;width:27.7px;text-align:center;font-size:5.8px;color:#3c3cec;-webkit-text-stroke:0.08px #3c3cec">0.00</div>
<div class="t" style="left:601.0px;top:221.79px;width:17.5px;text-align:center;font-size:5.8px;color:#3c3cec;-webkit-text-stroke:0.08px #3c3cec">0.00</div>
<div class="t" style="left:618.5px;top:221.79px;width:23.7px;text-align:center;font-size:5.8px;color:#3c3cec;-webkit-text-stroke:0.08px #3c3cec">0.00</div>
<div class="a" style="left:302.4px;top:228.7px;width:339.80000000000007px;height:9.51px;background:#fffde0"></div>
<div class="t" style="left:302.4px;top:231.3px;width:101.2px;text-align:center;font-size:5.6px;color:#3c3c3c;letter-spacing:-0.15px">L1-5-3 备用</div>
<div class="t" style="left:403.6px;top:231.3px;width:24.3px;text-align:center;font-size:5.8px;color:#3c3cec;-webkit-text-stroke:0.08px #3c3cec">0.00</div>
<div class="t" style="left:427.9px;top:231.3px;width:24.3px;text-align:center;font-size:5.8px;color:#3c3cec;-webkit-text-stroke:0.08px #3c3cec">0.00</div>
<div class="t" style="left:452.2px;top:231.3px;width:24.3px;text-align:center;font-size:5.8px;color:#3c3cec;-webkit-text-stroke:0.08px #3c3cec">0.00</div>
<div class="t" style="left:476.5px;top:231.3px;width:24.1px;text-align:center;font-size:5.8px;color:#3c3cec;-webkit-text-stroke:0.08px #3c3cec">0.00</div>
<div class="t" style="left:500.6px;top:231.3px;width:24.1px;text-align:center;font-size:5.8px;color:#3c3cec;-webkit-text-stroke:0.08px #3c3cec">0.00</div>
<div class="t" style="left:524.7px;top:231.3px;width:24.2px;text-align:center;font-size:5.8px;color:#3c3cec;-webkit-text-stroke:0.08px #3c3cec">0.00</div>
<div class="t" style="left:548.9px;top:231.3px;width:24.4px;text-align:center;font-size:5.8px;color:#3c3cec;-webkit-text-stroke:0.08px #3c3cec">0.00</div>
<div class="t" style="left:573.3px;top:231.3px;width:27.7px;text-align:center;font-size:5.8px;color:#3c3cec;-webkit-text-stroke:0.08px #3c3cec">0.00</div>
<div class="t" style="left:601.0px;top:231.3px;width:17.5px;text-align:center;font-size:5.8px;color:#3c3cec;-webkit-text-stroke:0.08px #3c3cec">0.00</div>
<div class="t" style="left:618.5px;top:231.3px;width:23.7px;text-align:center;font-size:5.8px;color:#3c3cec;-webkit-text-stroke:0.08px #3c3cec">0.00</div>
<div class="a" style="left:302.4px;top:238.21px;width:339.80000000000007px;height:9.51px;background:#e6e6e6"></div>
<div class="t" style="left:302.4px;top:240.81px;width:101.2px;text-align:center;font-size:5.6px;color:#3c3c3c;letter-spacing:-0.15px">L1-5-4 备用</div>
<div class="t" style="left:403.6px;top:240.81px;width:24.3px;text-align:center;font-size:5.8px;color:#3c3cec;-webkit-text-stroke:0.08px #3c3cec">0.00</div>
<div class="t" style="left:427.9px;top:240.81px;width:24.3px;text-align:center;font-size:5.8px;color:#3c3cec;-webkit-text-stroke:0.08px #3c3cec">0.00</div>
<div class="t" style="left:452.2px;top:240.81px;width:24.3px;text-align:center;font-size:5.8px;color:#3c3cec;-webkit-text-stroke:0.08px #3c3cec">0.00</div>
<div class="t" style="left:476.5px;top:240.81px;width:24.1px;text-align:center;font-size:5.8px;color:#3c3cec;-webkit-text-stroke:0.08px #3c3cec">0.00</div>
<div class="t" style="left:500.6px;top:240.81px;width:24.1px;text-align:center;font-size:5.8px;color:#3c3cec;-webkit-text-stroke:0.08px #3c3cec">0.00</div>
<div class="t" style="left:524.7px;top:240.81px;width:24.2px;text-align:center;font-size:5.8px;color:#3c3cec;-webkit-text-stroke:0.08px #3c3cec">0.00</div>
<div class="t" style="left:548.9px;top:240.81px;width:24.4px;text-align:center;font-size:5.8px;color:#3c3cec;-webkit-text-stroke:0.08px #3c3cec">0.00</div>
<div class="t" style="left:573.3px;top:240.81px;width:27.7px;text-align:center;font-size:5.8px;color:#3c3cec;-webkit-text-stroke:0.08px #3c3cec">0.00</div>
<div class="t" style="left:601.0px;top:240.81px;width:17.5px;text-align:center;font-size:5.8px;color:#3c3cec;-webkit-text-stroke:0.08px #3c3cec">0.00</div>
<div class="t" style="left:618.5px;top:240.81px;width:23.7px;text-align:center;font-size:5.8px;color:#3c3cec;-webkit-text-stroke:0.08px #3c3cec">0.00</div>
<div class="a" style="left:302.4px;top:247.72px;width:339.80000000000007px;height:9.51px;background:#fffde0"></div>
<div class="t" style="left:302.4px;top:250.32px;width:101.2px;text-align:center;font-size:5.6px;color:#3c3c3c;letter-spacing:-0.15px">L1-5-5 备用</div>
<div class="t" style="left:403.6px;top:250.32px;width:24.3px;text-align:center;font-size:5.8px;color:#3c3cec;-webkit-text-stroke:0.08px #3c3cec">0.00</div>
<div class="t" style="left:427.9px;top:250.32px;width:24.3px;text-align:center;font-size:5.8px;color:#3c3cec;-webkit-text-stroke:0.08px #3c3cec">0.00</div>
<div class="t" style="left:452.2px;top:250.32px;width:24.3px;text-align:center;font-size:5.8px;color:#3c3cec;-webkit-text-stroke:0.08px #3c3cec">0.00</div>
<div class="t" style="left:476.5px;top:250.32px;width:24.1px;text-align:center;font-size:5.8px;color:#3c3cec;-webkit-text-stroke:0.08px #3c3cec">0.00</div>
<div class="t" style="left:500.6px;top:250.32px;width:24.1px;text-align:center;font-size:5.8px;color:#3c3cec;-webkit-text-stroke:0.08px #3c3cec">0.00</div>
<div class="t" style="left:524.7px;top:250.32px;width:24.2px;text-align:center;font-size:5.8px;color:#3c3cec;-webkit-text-stroke:0.08px #3c3cec">0.00</div>
<div class="t" style="left:548.9px;top:250.32px;width:24.4px;text-align:center;font-size:5.8px;color:#3c3cec;-webkit-text-stroke:0.08px #3c3cec">0.00</div>
<div class="t" style="left:573.3px;top:250.32px;width:27.7px;text-align:center;font-size:5.8px;color:#3c3cec;-webkit-text-stroke:0.08px #3c3cec">0.00</div>
<div class="t" style="left:601.0px;top:250.32px;width:17.5px;text-align:center;font-size:5.8px;color:#3c3cec;-webkit-text-stroke:0.08px #3c3cec">0.00</div>
<div class="t" style="left:618.5px;top:250.32px;width:23.7px;text-align:center;font-size:5.8px;color:#3c3cec;-webkit-text-stroke:0.08px #3c3cec">0.00</div>
<div class="a" style="left:302.4px;top:257.23px;width:339.80000000000007px;height:9.51px;background:#e6e6e6"></div>
<div class="t" style="left:302.4px;top:259.83px;width:101.2px;text-align:center;font-size:5.6px;color:#3c3c3c;letter-spacing:-0.15px">L1-6-1 冷冻机组B1LD3</div>
<div class="t" style="left:403.6px;top:259.83px;width:24.3px;text-align:center;font-size:5.8px;color:#3c3cec;-webkit-text-stroke:0.08px #3c3cec">0.00</div>
<div class="t" style="left:427.9px;top:259.83px;width:24.3px;text-align:center;font-size:5.8px;color:#3c3cec;-webkit-text-stroke:0.08px #3c3cec">0.00</div>
<div class="t" style="left:452.2px;top:259.83px;width:24.3px;text-align:center;font-size:5.8px;color:#3c3cec;-webkit-text-stroke:0.08px #3c3cec">0.00</div>
<div class="t" style="left:476.5px;top:259.83px;width:24.1px;text-align:center;font-size:5.8px;color:#3c3cec;-webkit-text-stroke:0.08px #3c3cec">0.00</div>
<div class="t" style="left:500.6px;top:259.83px;width:24.1px;text-align:center;font-size:5.8px;color:#3c3cec;-webkit-text-stroke:0.08px #3c3cec">0.00</div>
<div class="t" style="left:524.7px;top:259.83px;width:24.2px;text-align:center;font-size:5.8px;color:#3c3cec;-webkit-text-stroke:0.08px #3c3cec">0.00</div>
<div class="t" style="left:548.9px;top:259.83px;width:24.4px;text-align:center;font-size:5.8px;color:#3c3cec;-webkit-text-stroke:0.08px #3c3cec">0.00</div>
<div class="t" style="left:573.3px;top:259.83px;width:27.7px;text-align:center;font-size:5.8px;color:#3c3cec;-webkit-text-stroke:0.08px #3c3cec">0.00</div>
<div class="t" style="left:601.0px;top:259.83px;width:17.5px;text-align:center;font-size:5.8px;color:#3c3cec;-webkit-text-stroke:0.08px #3c3cec">0.00</div>
<div class="t" style="left:618.5px;top:259.83px;width:23.7px;text-align:center;font-size:5.8px;color:#3c3cec;-webkit-text-stroke:0.08px #3c3cec">0.00</div>
<div class="a" style="left:302.4px;top:266.74px;width:339.80000000000007px;height:9.51px;background:#fffde0"></div>
<div class="t" style="left:302.4px;top:269.34px;width:101.2px;text-align:center;font-size:5.6px;color:#3c3c3c;letter-spacing:-0.15px">L1-6-2 备用</div>
<div class="t" style="left:403.6px;top:269.34px;width:24.3px;text-align:center;font-size:5.8px;color:#3c3cec;-webkit-text-stroke:0.08px #3c3cec">0.00</div>
<div class="t" style="left:427.9px;top:269.34px;width:24.3px;text-align:center;font-size:5.8px;color:#3c3cec;-webkit-text-stroke:0.08px #3c3cec">0.00</div>
<div class="t" style="left:452.2px;top:269.34px;width:24.3px;text-align:center;font-size:5.8px;color:#3c3cec;-webkit-text-stroke:0.08px #3c3cec">0.00</div>
<div class="t" style="left:476.5px;top:269.34px;width:24.1px;text-align:center;font-size:5.8px;color:#3c3cec;-webkit-text-stroke:0.08px #3c3cec">0.00</div>
<div class="t" style="left:500.6px;top:269.34px;width:24.1px;text-align:center;font-size:5.8px;color:#3c3cec;-webkit-text-stroke:0.08px #3c3cec">0.00</div>
<div class="t" style="left:524.7px;top:269.34px;width:24.2px;text-align:center;font-size:5.8px;color:#3c3cec;-webkit-text-stroke:0.08px #3c3cec">0.00</div>
<div class="t" style="left:548.9px;top:269.34px;width:24.4px;text-align:center;font-size:5.8px;color:#3c3cec;-webkit-text-stroke:0.08px #3c3cec">0.00</div>
<div class="t" style="left:573.3px;top:269.34px;width:27.7px;text-align:center;font-size:5.8px;color:#3c3cec;-webkit-text-stroke:0.08px #3c3cec">0.00</div>
<div class="t" style="left:601.0px;top:269.34px;width:17.5px;text-align:center;font-size:5.8px;color:#3c3cec;-webkit-text-stroke:0.08px #3c3cec">0.00</div>
<div class="t" style="left:618.5px;top:269.34px;width:23.7px;text-align:center;font-size:5.8px;color:#3c3cec;-webkit-text-stroke:0.08px #3c3cec">0.00</div>
<div class="a" style="left:302.4px;top:276.25px;width:339.80000000000007px;height:9.51px;background:#e6e6e6"></div>
<div class="t" style="left:302.4px;top:278.85px;width:101.2px;text-align:center;font-size:5.6px;color:#3c3c3c;letter-spacing:-0.15px">L1-6-3 备用</div>
<div class="t" style="left:403.6px;top:278.85px;width:24.3px;text-align:center;font-size:5.8px;color:#3c3cec;-webkit-text-stroke:0.08px #3c3cec">0.00</div>
<div class="t" style="left:427.9px;top:278.85px;width:24.3px;text-align:center;font-size:5.8px;color:#3c3cec;-webkit-text-stroke:0.08px #3c3cec">0.00</div>
<div class="t" style="left:452.2px;top:278.85px;width:24.3px;text-align:center;font-size:5.8px;color:#3c3cec;-webkit-text-stroke:0.08px #3c3cec">0.00</div>
<div class="t" style="left:476.5px;top:278.85px;width:24.1px;text-align:center;font-size:5.8px;color:#3c3cec;-webkit-text-stroke:0.08px #3c3cec">0.00</div>
<div class="t" style="left:500.6px;top:278.85px;width:24.1px;text-align:center;font-size:5.8px;color:#3c3cec;-webkit-text-stroke:0.08px #3c3cec">0.00</div>
<div class="t" style="left:524.7px;top:278.85px;width:24.2px;text-align:center;font-size:5.8px;color:#3c3cec;-webkit-text-stroke:0.08px #3c3cec">0.00</div>
<div class="t" style="left:548.9px;top:278.85px;width:24.4px;text-align:center;font-size:5.8px;color:#3c3cec;-webkit-text-stroke:0.08px #3c3cec">0.00</div>
<div class="t" style="left:573.3px;top:278.85px;width:27.7px;text-align:center;font-size:5.8px;color:#3c3cec;-webkit-text-stroke:0.08px #3c3cec">0.00</div>
<div class="t" style="left:601.0px;top:278.85px;width:17.5px;text-align:center;font-size:5.8px;color:#3c3cec;-webkit-text-stroke:0.08px #3c3cec">0.00</div>
<div class="t" style="left:618.5px;top:278.85px;width:23.7px;text-align:center;font-size:5.8px;color:#3c3cec;-webkit-text-stroke:0.08px #3c3cec">0.00</div>
<div class="a" style="left:302.4px;top:285.76px;width:339.80000000000007px;height:9.51px;background:#fffde0"></div>
<div class="t" style="left:302.4px;top:288.36px;width:101.2px;text-align:center;font-size:5.6px;color:#3c3c3c;letter-spacing:-0.15px">L1-6-4 备用</div>
<div class="t" style="left:403.6px;top:288.36px;width:24.3px;text-align:center;font-size:5.8px;color:#3c3cec;-webkit-text-stroke:0.08px #3c3cec">0.00</div>
<div class="t" style="left:427.9px;top:288.36px;width:24.3px;text-align:center;font-size:5.8px;color:#3c3cec;-webkit-text-stroke:0.08px #3c3cec">0.00</div>
<div class="t" style="left:452.2px;top:288.36px;width:24.3px;text-align:center;font-size:5.8px;color:#3c3cec;-webkit-text-stroke:0.08px #3c3cec">0.00</div>
<div class="t" style="left:476.5px;top:288.36px;width:24.1px;text-align:center;font-size:5.8px;color:#3c3cec;-webkit-text-stroke:0.08px #3c3cec">0.00</div>
<div class="t" style="left:500.6px;top:288.36px;width:24.1px;text-align:center;font-size:5.8px;color:#3c3cec;-webkit-text-stroke:0.08px #3c3cec">0.00</div>
<div class="t" style="left:524.7px;top:288.36px;width:24.2px;text-align:center;font-size:5.8px;color:#3c3cec;-webkit-text-stroke:0.08px #3c3cec">0.00</div>
<div class="t" style="left:548.9px;top:288.36px;width:24.4px;text-align:center;font-size:5.8px;color:#3c3cec;-webkit-text-stroke:0.08px #3c3cec">0.00</div>
<div class="t" style="left:573.3px;top:288.36px;width:27.7px;text-align:center;font-size:5.8px;color:#3c3cec;-webkit-text-stroke:0.08px #3c3cec">0.00</div>
<div class="t" style="left:601.0px;top:288.36px;width:17.5px;text-align:center;font-size:5.8px;color:#3c3cec;-webkit-text-stroke:0.08px #3c3cec">0.00</div>
<div class="t" style="left:618.5px;top:288.36px;width:23.7px;text-align:center;font-size:5.8px;color:#3c3cec;-webkit-text-stroke:0.08px #3c3cec">0.00</div>
<div class="a" style="left:302.4px;top:295.27px;width:339.80000000000007px;height:9.51px;background:#e6e6e6"></div>
<div class="t" style="left:302.4px;top:297.87px;width:101.2px;text-align:center;font-size:5.6px;color:#3c3c3c;letter-spacing:-0.15px">L1-6-5 备用</div>
<div class="t" style="left:403.6px;top:297.87px;width:24.3px;text-align:center;font-size:5.8px;color:#3c3cec;-webkit-text-stroke:0.08px #3c3cec">0.00</div>
<div class="t" style="left:427.9px;top:297.87px;width:24.3px;text-align:center;font-size:5.8px;color:#3c3cec;-webkit-text-stroke:0.08px #3c3cec">0.00</div>
<div class="t" style="left:452.2px;top:297.87px;width:24.3px;text-align:center;font-size:5.8px;color:#3c3cec;-webkit-text-stroke:0.08px #3c3cec">0.00</div>
<div class="t" style="left:476.5px;top:297.87px;width:24.1px;text-align:center;font-size:5.8px;color:#3c3cec;-webkit-text-stroke:0.08px #3c3cec">0.00</div>
<div class="t" style="left:500.6px;top:297.87px;width:24.1px;text-align:center;font-size:5.8px;color:#3c3cec;-webkit-text-stroke:0.08px #3c3cec">0.00</div>
<div class="t" style="left:524.7px;top:297.87px;width:24.2px;text-align:center;font-size:5.8px;color:#3c3cec;-webkit-text-stroke:0.08px #3c3cec">0.00</div>
<div class="t" style="left:548.9px;top:297.87px;width:24.4px;text-align:center;font-size:5.8px;color:#3c3cec;-webkit-text-stroke:0.08px #3c3cec">0.00</div>
<div class="t" style="left:573.3px;top:297.87px;width:27.7px;text-align:center;font-size:5.8px;color:#3c3cec;-webkit-text-stroke:0.08px #3c3cec">0.00</div>
<div class="t" style="left:601.0px;top:297.87px;width:17.5px;text-align:center;font-size:5.8px;color:#3c3cec;-webkit-text-stroke:0.08px #3c3cec">0.00</div>
<div class="t" style="left:618.5px;top:297.87px;width:23.7px;text-align:center;font-size:5.8px;color:#3c3cec;-webkit-text-stroke:0.08px #3c3cec">0.00</div>
<div class="a" style="left:302.4px;top:304.78px;width:339.80000000000007px;height:9.51px;background:#fffde0"></div>
<div class="t" style="left:302.4px;top:307.38px;width:101.2px;text-align:center;font-size:5.6px;color:#3c3c3c;letter-spacing:-0.15px">L1-7-1 备用</div>
<div class="t" style="left:403.6px;top:307.38px;width:24.3px;text-align:center;font-size:5.8px;color:#3c3cec;-webkit-text-stroke:0.08px #3c3cec">0.00</div>
<div class="t" style="left:427.9px;top:307.38px;width:24.3px;text-align:center;font-size:5.8px;color:#3c3cec;-webkit-text-stroke:0.08px #3c3cec">0.00</div>
<div class="t" style="left:452.2px;top:307.38px;width:24.3px;text-align:center;font-size:5.8px;color:#3c3cec;-webkit-text-stroke:0.08px #3c3cec">0.00</div>
<div class="t" style="left:476.5px;top:307.38px;width:24.1px;text-align:center;font-size:5.8px;color:#3c3cec;-webkit-text-stroke:0.08px #3c3cec">0.00</div>
<div class="t" style="left:500.6px;top:307.38px;width:24.1px;text-align:center;font-size:5.8px;color:#3c3cec;-webkit-text-stroke:0.08px #3c3cec">0.00</div>
<div class="t" style="left:524.7px;top:307.38px;width:24.2px;text-align:center;font-size:5.8px;color:#3c3cec;-webkit-text-stroke:0.08px #3c3cec">0.00</div>
<div class="t" style="left:548.9px;top:307.38px;width:24.4px;text-align:center;font-size:5.8px;color:#3c3cec;-webkit-text-stroke:0.08px #3c3cec">0.00</div>
<div class="t" style="left:573.3px;top:307.38px;width:27.7px;text-align:center;font-size:5.8px;color:#3c3cec;-webkit-text-stroke:0.08px #3c3cec">0.00</div>
<div class="t" style="left:601.0px;top:307.38px;width:17.5px;text-align:center;font-size:5.8px;color:#3c3cec;-webkit-text-stroke:0.08px #3c3cec">0.00</div>
<div class="t" style="left:618.5px;top:307.38px;width:23.7px;text-align:center;font-size:5.8px;color:#3c3cec;-webkit-text-stroke:0.08px #3c3cec">0.00</div>
<div class="a" style="left:302.4px;top:314.29px;width:339.80000000000007px;height:9.51px;background:#e6e6e6"></div>
<div class="t" style="left:302.4px;top:316.89px;width:101.2px;text-align:center;font-size:5.6px;color:#3c3c3c;letter-spacing:-0.15px">L1-7-2 备用</div>
<div class="t" style="left:403.6px;top:316.89px;width:24.3px;text-align:center;font-size:5.8px;color:#3c3cec;-webkit-text-stroke:0.08px #3c3cec">0.00</div>
<div class="t" style="left:427.9px;top:316.89px;width:24.3px;text-align:center;font-size:5.8px;color:#3c3cec;-webkit-text-stroke:0.08px #3c3cec">0.00</div>
<div class="t" style="left:452.2px;top:316.89px;width:24.3px;text-align:center;font-size:5.8px;color:#3c3cec;-webkit-text-stroke:0.08px #3c3cec">0.00</div>
<div class="t" style="left:476.5px;top:316.89px;width:24.1px;text-align:center;font-size:5.8px;color:#3c3cec;-webkit-text-stroke:0.08px #3c3cec">0.00</div>
<div class="t" style="left:500.6px;top:316.89px;width:24.1px;text-align:center;font-size:5.8px;color:#3c3cec;-webkit-text-stroke:0.08px #3c3cec">0.00</div>
<div class="t" style="left:524.7px;top:316.89px;width:24.2px;text-align:center;font-size:5.8px;color:#3c3cec;-webkit-text-stroke:0.08px #3c3cec">0.00</div>
<div class="t" style="left:548.9px;top:316.89px;width:24.4px;text-align:center;font-size:5.8px;color:#3c3cec;-webkit-text-stroke:0.08px #3c3cec">0.00</div>
<div class="t" style="left:573.3px;top:316.89px;width:27.7px;text-align:center;font-size:5.8px;color:#3c3cec;-webkit-text-stroke:0.08px #3c3cec">0.00</div>
<div class="t" style="left:601.0px;top:316.89px;width:17.5px;text-align:center;font-size:5.8px;color:#3c3cec;-webkit-text-stroke:0.08px #3c3cec">0.00</div>
<div class="t" style="left:618.5px;top:316.89px;width:23.7px;text-align:center;font-size:5.8px;color:#3c3cec;-webkit-text-stroke:0.08px #3c3cec">0.00</div>
<div class="a" style="left:302.4px;top:323.8px;width:339.80000000000007px;height:9.51px;background:#fffde0"></div>
<div class="t" style="left:302.4px;top:326.4px;width:101.2px;text-align:center;font-size:5.6px;color:#3c3c3c;letter-spacing:-0.15px">L1-7-3 备用</div>
<div class="t" style="left:403.6px;top:326.4px;width:24.3px;text-align:center;font-size:5.8px;color:#3c3cec;-webkit-text-stroke:0.08px #3c3cec">0.00</div>
<div class="t" style="left:427.9px;top:326.4px;width:24.3px;text-align:center;font-size:5.8px;color:#3c3cec;-webkit-text-stroke:0.08px #3c3cec">0.00</div>
<div class="t" style="left:452.2px;top:326.4px;width:24.3px;text-align:center;font-size:5.8px;color:#3c3cec;-webkit-text-stroke:0.08px #3c3cec">0.00</div>
<div class="t" style="left:476.5px;top:326.4px;width:24.1px;text-align:center;font-size:5.8px;color:#3c3cec;-webkit-text-stroke:0.08px #3c3cec">0.00</div>
<div class="t" style="left:500.6px;top:326.4px;width:24.1px;text-align:center;font-size:5.8px;color:#3c3cec;-webkit-text-stroke:0.08px #3c3cec">0.00</div>
<div class="t" style="left:524.7px;top:326.4px;width:24.2px;text-align:center;font-size:5.8px;color:#3c3cec;-webkit-text-stroke:0.08px #3c3cec">0.00</div>
<div class="t" style="left:548.9px;top:326.4px;width:24.4px;text-align:center;font-size:5.8px;color:#3c3cec;-webkit-text-stroke:0.08px #3c3cec">0.00</div>
<div class="t" style="left:573.3px;top:326.4px;width:27.7px;text-align:center;font-size:5.8px;color:#3c3cec;-webkit-text-stroke:0.08px #3c3cec">0.00</div>
<div class="t" style="left:601.0px;top:326.4px;width:17.5px;text-align:center;font-size:5.8px;color:#3c3cec;-webkit-text-stroke:0.08px #3c3cec">0.00</div>
<div class="t" style="left:618.5px;top:326.4px;width:23.7px;text-align:center;font-size:5.8px;color:#3c3cec;-webkit-text-stroke:0.08px #3c3cec">0.00</div>
<div class="a" style="left:302.4px;top:333.31px;width:339.80000000000007px;height:9.51px;background:#e6e6e6"></div>
<div class="t" style="left:302.4px;top:335.91px;width:101.2px;text-align:center;font-size:5.6px;color:#3c3c3c;letter-spacing:-0.15px">L1-7-4 备用</div>
<div class="t" style="left:403.6px;top:335.91px;width:24.3px;text-align:center;font-size:5.8px;color:#3c3cec;-webkit-text-stroke:0.08px #3c3cec">0.00</div>
<div class="t" style="left:427.9px;top:335.91px;width:24.3px;text-align:center;font-size:5.8px;color:#3c3cec;-webkit-text-stroke:0.08px #3c3cec">0.00</div>
<div class="t" style="left:452.2px;top:335.91px;width:24.3px;text-align:center;font-size:5.8px;color:#3c3cec;-webkit-text-stroke:0.08px #3c3cec">0.00</div>
<div class="t" style="left:476.5px;top:335.91px;width:24.1px;text-align:center;font-size:5.8px;color:#3c3cec;-webkit-text-stroke:0.08px #3c3cec">0.00</div>
<div class="t" style="left:500.6px;top:335.91px;width:24.1px;text-align:center;font-size:5.8px;color:#3c3cec;-webkit-text-stroke:0.08px #3c3cec">0.00</div>
<div class="t" style="left:524.7px;top:335.91px;width:24.2px;text-align:center;font-size:5.8px;color:#3c3cec;-webkit-text-stroke:0.08px #3c3cec">0.00</div>
<div class="t" style="left:548.9px;top:335.91px;width:24.4px;text-align:center;font-size:5.8px;color:#3c3cec;-webkit-text-stroke:0.08px #3c3cec">0.00</div>
<div class="t" style="left:573.3px;top:335.91px;width:27.7px;text-align:center;font-size:5.8px;color:#3c3cec;-webkit-text-stroke:0.08px #3c3cec">0.00</div>
<div class="t" style="left:601.0px;top:335.91px;width:17.5px;text-align:center;font-size:5.8px;color:#3c3cec;-webkit-text-stroke:0.08px #3c3cec">0.00</div>
<div class="t" style="left:618.5px;top:335.91px;width:23.7px;text-align:center;font-size:5.8px;color:#3c3cec;-webkit-text-stroke:0.08px #3c3cec">0.00</div>
<div class="a" style="left:302.4px;top:342.82px;width:339.80000000000007px;height:9.51px;background:#fffde0"></div>
<div class="t" style="left:302.4px;top:345.42px;width:101.2px;text-align:center;font-size:5.6px;color:#3c3c3c;letter-spacing:-0.15px">L1-7-5 备用</div>
<div class="t" style="left:403.6px;top:345.42px;width:24.3px;text-align:center;font-size:5.8px;color:#3c3cec;-webkit-text-stroke:0.08px #3c3cec">0.00</div>
<div class="t" style="left:427.9px;top:345.42px;width:24.3px;text-align:center;font-size:5.8px;color:#3c3cec;-webkit-text-stroke:0.08px #3c3cec">0.00</div>
<div class="t" style="left:452.2px;top:345.42px;width:24.3px;text-align:center;font-size:5.8px;color:#3c3cec;-webkit-text-stroke:0.08px #3c3cec">0.00</div>
<div class="t" style="left:476.5px;top:345.42px;width:24.1px;text-align:center;font-size:5.8px;color:#3c3cec;-webkit-text-stroke:0.08px #3c3cec">0.00</div>
<div class="t" style="left:500.6px;top:345.42px;width:24.1px;text-align:center;font-size:5.8px;color:#3c3cec;-webkit-text-stroke:0.08px #3c3cec">0.00</div>
<div class="t" style="left:524.7px;top:345.42px;width:24.2px;text-align:center;font-size:5.8px;color:#3c3cec;-webkit-text-stroke:0.08px #3c3cec">0.00</div>
<div class="t" style="left:548.9px;top:345.42px;width:24.4px;text-align:center;font-size:5.8px;color:#3c3cec;-webkit-text-stroke:0.08px #3c3cec">0.00</div>
<div class="t" style="left:573.3px;top:345.42px;width:27.7px;text-align:center;font-size:5.8px;color:#3c3cec;-webkit-text-stroke:0.08px #3c3cec">0.00</div>
<div class="t" style="left:601.0px;top:345.42px;width:17.5px;text-align:center;font-size:5.8px;color:#3c3cec;-webkit-text-stroke:0.08px #3c3cec">0.00</div>
<div class="t" style="left:618.5px;top:345.42px;width:23.7px;text-align:center;font-size:5.8px;color:#3c3cec;-webkit-text-stroke:0.08px #3c3cec">0.00</div>
<div class="a" style="left:302.4px;top:352.33px;width:339.80000000000007px;height:9.51px;background:#e6e6e6"></div>
<div class="t" style="left:302.4px;top:354.93px;width:101.2px;text-align:center;font-size:5.6px;color:#3c3c3c;letter-spacing:-0.15px">L1-7-6 备用</div>
<div class="t" style="left:403.6px;top:354.93px;width:24.3px;text-align:center;font-size:5.8px;color:#3c3cec;-webkit-text-stroke:0.08px #3c3cec">0.00</div>
<div class="t" style="left:427.9px;top:354.93px;width:24.3px;text-align:center;font-size:5.8px;color:#3c3cec;-webkit-text-stroke:0.08px #3c3cec">0.00</div>
<div class="t" style="left:452.2px;top:354.93px;width:24.3px;text-align:center;font-size:5.8px;color:#3c3cec;-webkit-text-stroke:0.08px #3c3cec">0.00</div>
<div class="t" style="left:476.5px;top:354.93px;width:24.1px;text-align:center;font-size:5.8px;color:#3c3cec;-webkit-text-stroke:0.08px #3c3cec">0.00</div>
<div class="t" style="left:500.6px;top:354.93px;width:24.1px;text-align:center;font-size:5.8px;color:#3c3cec;-webkit-text-stroke:0.08px #3c3cec">0.00</div>
<div class="t" style="left:524.7px;top:354.93px;width:24.2px;text-align:center;font-size:5.8px;color:#3c3cec;-webkit-text-stroke:0.08px #3c3cec">0.00</div>
<div class="t" style="left:548.9px;top:354.93px;width:24.4px;text-align:center;font-size:5.8px;color:#3c3cec;-webkit-text-stroke:0.08px #3c3cec">0.00</div>
<div class="t" style="left:573.3px;top:354.93px;width:27.7px;text-align:center;font-size:5.8px;color:#3c3cec;-webkit-text-stroke:0.08px #3c3cec">0.00</div>
<div class="t" style="left:601.0px;top:354.93px;width:17.5px;text-align:center;font-size:5.8px;color:#3c3cec;-webkit-text-stroke:0.08px #3c3cec">0.00</div>
<div class="t" style="left:618.5px;top:354.93px;width:23.7px;text-align:center;font-size:5.8px;color:#3c3cec;-webkit-text-stroke:0.08px #3c3cec">0.00</div>
<div class="a" style="left:302.4px;top:361.84px;width:339.80000000000007px;height:9.51px;background:#fffde0"></div>
<div class="t" style="left:302.4px;top:364.44px;width:101.2px;text-align:center;font-size:5.6px;color:#3c3c3c;letter-spacing:-0.15px">L1-7-7 备用</div>
<div class="t" style="left:403.6px;top:364.44px;width:24.3px;text-align:center;font-size:5.8px;color:#3c3cec;-webkit-text-stroke:0.08px #3c3cec">0.00</div>
<div class="t" style="left:427.9px;top:364.44px;width:24.3px;text-align:center;font-size:5.8px;color:#3c3cec;-webkit-text-stroke:0.08px #3c3cec">0.00</div>
<div class="t" style="left:452.2px;top:364.44px;width:24.3px;text-align:center;font-size:5.8px;color:#3c3cec;-webkit-text-stroke:0.08px #3c3cec">0.00</div>
<div class="t" style="left:476.5px;top:364.44px;width:24.1px;text-align:center;font-size:5.8px;color:#3c3cec;-webkit-text-stroke:0.08px #3c3cec">0.00</div>
<div class="t" style="left:500.6px;top:364.44px;width:24.1px;text-align:center;font-size:5.8px;color:#3c3cec;-webkit-text-stroke:0.08px #3c3cec">0.00</div>
<div class="t" style="left:524.7px;top:364.44px;width:24.2px;text-align:center;font-size:5.8px;color:#3c3cec;-webkit-text-stroke:0.08px #3c3cec">0.00</div>
<div class="t" style="left:548.9px;top:364.44px;width:24.4px;text-align:center;font-size:5.8px;color:#3c3cec;-webkit-text-stroke:0.08px #3c3cec">0.00</div>
<div class="t" style="left:573.3px;top:364.44px;width:27.7px;text-align:center;font-size:5.8px;color:#3c3cec;-webkit-text-stroke:0.08px #3c3cec">0.00</div>
<div class="t" style="left:601.0px;top:364.44px;width:17.5px;text-align:center;font-size:5.8px;color:#3c3cec;-webkit-text-stroke:0.08px #3c3cec">0.00</div>
<div class="t" style="left:618.5px;top:364.44px;width:23.7px;text-align:center;font-size:5.8px;color:#3c3cec;-webkit-text-stroke:0.08px #3c3cec">0.00</div>
<div class="a" style="left:302.4px;top:371.35px;width:339.80000000000007px;height:9.51px;background:#e6e6e6"></div>
<div class="t" style="left:302.4px;top:373.95px;width:101.2px;text-align:center;font-size:5.6px;color:#3c3c3c;letter-spacing:-0.15px">L1-8-1 备用</div>
<div class="t" style="left:403.6px;top:373.95px;width:24.3px;text-align:center;font-size:5.8px;color:#3c3cec;-webkit-text-stroke:0.08px #3c3cec">0.00</div>
<div class="t" style="left:427.9px;top:373.95px;width:24.3px;text-align:center;font-size:5.8px;color:#3c3cec;-webkit-text-stroke:0.08px #3c3cec">0.00</div>
<div class="t" style="left:452.2px;top:373.95px;width:24.3px;text-align:center;font-size:5.8px;color:#3c3cec;-webkit-text-stroke:0.08px #3c3cec">0.00</div>
<div class="t" style="left:476.5px;top:373.95px;width:24.1px;text-align:center;font-size:5.8px;color:#3c3cec;-webkit-text-stroke:0.08px #3c3cec">0.00</div>
<div class="t" style="left:500.6px;top:373.95px;width:24.1px;text-align:center;font-size:5.8px;color:#3c3cec;-webkit-text-stroke:0.08px #3c3cec">0.00</div>
<div class="t" style="left:524.7px;top:373.95px;width:24.2px;text-align:center;font-size:5.8px;color:#3c3cec;-webkit-text-stroke:0.08px #3c3cec">0.00</div>
<div class="t" style="left:548.9px;top:373.95px;width:24.4px;text-align:center;font-size:5.8px;color:#3c3cec;-webkit-text-stroke:0.08px #3c3cec">0.00</div>
<div class="t" style="left:573.3px;top:373.95px;width:27.7px;text-align:center;font-size:5.8px;color:#3c3cec;-webkit-text-stroke:0.08px #3c3cec">0.00</div>
<div class="t" style="left:601.0px;top:373.95px;width:17.5px;text-align:center;font-size:5.8px;color:#3c3cec;-webkit-text-stroke:0.08px #3c3cec">0.00</div>
<div class="t" style="left:618.5px;top:373.95px;width:23.7px;text-align:center;font-size:5.8px;color:#3c3cec;-webkit-text-stroke:0.08px #3c3cec">0.00</div>
<div class="a" style="left:302.4px;top:380.86px;width:339.80000000000007px;height:9.51px;background:#fffde0"></div>
<div class="t" style="left:302.4px;top:383.46px;width:101.2px;text-align:center;font-size:5.6px;color:#3c3c3c;letter-spacing:-0.15px">L1-8-2 备用</div>
<div class="t" style="left:403.6px;top:383.46px;width:24.3px;text-align:center;font-size:5.8px;color:#3c3cec;-webkit-text-stroke:0.08px #3c3cec">0.00</div>
<div class="t" style="left:427.9px;top:383.46px;width:24.3px;text-align:center;font-size:5.8px;color:#3c3cec;-webkit-text-stroke:0.08px #3c3cec">0.00</div>
<div class="t" style="left:452.2px;top:383.46px;width:24.3px;text-align:center;font-size:5.8px;color:#3c3cec;-webkit-text-stroke:0.08px #3c3cec">0.00</div>
<div class="t" style="left:476.5px;top:383.46px;width:24.1px;text-align:center;font-size:5.8px;color:#3c3cec;-webkit-text-stroke:0.08px #3c3cec">0.00</div>
<div class="t" style="left:500.6px;top:383.46px;width:24.1px;text-align:center;font-size:5.8px;color:#3c3cec;-webkit-text-stroke:0.08px #3c3cec">0.00</div>
<div class="t" style="left:524.7px;top:383.46px;width:24.2px;text-align:center;font-size:5.8px;color:#3c3cec;-webkit-text-stroke:0.08px #3c3cec">0.00</div>
<div class="t" style="left:548.9px;top:383.46px;width:24.4px;text-align:center;font-size:5.8px;color:#3c3cec;-webkit-text-stroke:0.08px #3c3cec">0.00</div>
<div class="t" style="left:573.3px;top:383.46px;width:27.7px;text-align:center;font-size:5.8px;color:#3c3cec;-webkit-text-stroke:0.08px #3c3cec">0.00</div>
<div class="t" style="left:601.0px;top:383.46px;width:17.5px;text-align:center;font-size:5.8px;color:#3c3cec;-webkit-text-stroke:0.08px #3c3cec">0.00</div>
<div class="t" style="left:618.5px;top:383.46px;width:23.7px;text-align:center;font-size:5.8px;color:#3c3cec;-webkit-text-stroke:0.08px #3c3cec">0.00</div>
<div class="t" style="left:237.5px;top:282.5px;width:64.9px;text-align:center;font-size:6px;font-weight:bold;color:#111">1#变</div>
<div class="a" style="left:237.5px;top:85.3px;width:405.70000000000005px;height:1px;background:#b8b8b8"></div>
<div class="a" style="left:237.5px;top:94.5px;width:405.70000000000005px;height:1px;background:#b8b8b8"></div>
<div class="a" style="left:237.5px;top:111.1px;width:405.70000000000005px;height:1px;background:#b8b8b8"></div>
<div class="a" style="left:237.5px;top:121.9px;width:405.70000000000005px;height:1px;background:#b8b8b8"></div>
<div class="a" style="left:237.5px;top:133.2px;width:405.70000000000005px;height:1px;background:#b8b8b8"></div>
<div class="a" style="left:302.4px;top:389.87px;width:340.80000000000007px;height:1px;background:#d0d0d0"></div>
<div class="a" style="left:237px;top:85.3px;width:1px;height:305.07px;background:#b8b8b8"></div>
<div class="a" style="left:302px;top:85.3px;width:1px;height:9.5px;background:#b8b8b8"></div>
<div class="a" style="left:302px;top:121.9px;width:1px;height:268.47px;background:#b8b8b8"></div>
<div class="a" style="left:403px;top:85.3px;width:1px;height:9.5px;background:#b8b8b8"></div>
<div class="a" style="left:403px;top:121.9px;width:1px;height:11.5px;background:#b8b8b8"></div>
<div class="a" style="left:403px;top:133.3px;width:1px;height:257.07px;background:#d4d4d4"></div>
<div class="a" style="left:427px;top:85.3px;width:1px;height:9.5px;background:#b8b8b8"></div>
<div class="a" style="left:427px;top:121.9px;width:1px;height:11.5px;background:#b8b8b8"></div>
<div class="a" style="left:427px;top:133.3px;width:1px;height:257.07px;background:#d4d4d4"></div>
<div class="a" style="left:452px;top:85.3px;width:1px;height:9.5px;background:#b8b8b8"></div>
<div class="a" style="left:452px;top:121.9px;width:1px;height:11.5px;background:#b8b8b8"></div>
<div class="a" style="left:452px;top:133.3px;width:1px;height:257.07px;background:#d4d4d4"></div>
<div class="a" style="left:476px;top:85.3px;width:1px;height:9.5px;background:#b8b8b8"></div>
<div class="a" style="left:476px;top:121.9px;width:1px;height:11.5px;background:#b8b8b8"></div>
<div class="a" style="left:476px;top:133.3px;width:1px;height:257.07px;background:#d4d4d4"></div>
<div class="a" style="left:500px;top:85.3px;width:1px;height:9.5px;background:#b8b8b8"></div>
<div class="a" style="left:500px;top:121.9px;width:1px;height:11.5px;background:#b8b8b8"></div>
<div class="a" style="left:500px;top:133.3px;width:1px;height:257.07px;background:#d4d4d4"></div>
<div class="a" style="left:524px;top:85.3px;width:1px;height:9.5px;background:#b8b8b8"></div>
<div class="a" style="left:524px;top:121.9px;width:1px;height:11.5px;background:#b8b8b8"></div>
<div class="a" style="left:524px;top:133.3px;width:1px;height:257.07px;background:#d4d4d4"></div>
<div class="a" style="left:548px;top:85.3px;width:1px;height:9.5px;background:#b8b8b8"></div>
<div class="a" style="left:548px;top:121.9px;width:1px;height:11.5px;background:#b8b8b8"></div>
<div class="a" style="left:548px;top:133.3px;width:1px;height:257.07px;background:#d4d4d4"></div>
<div class="a" style="left:573px;top:85.3px;width:1px;height:9.5px;background:#b8b8b8"></div>
<div class="a" style="left:573px;top:121.9px;width:1px;height:11.5px;background:#b8b8b8"></div>
<div class="a" style="left:573px;top:133.3px;width:1px;height:257.07px;background:#d4d4d4"></div>
<div class="a" style="left:601px;top:85.3px;width:1px;height:9.5px;background:#b8b8b8"></div>
<div class="a" style="left:601px;top:121.9px;width:1px;height:11.5px;background:#b8b8b8"></div>
<div class="a" style="left:601px;top:133.3px;width:1px;height:257.07px;background:#d4d4d4"></div>
<div class="a" style="left:618px;top:85.3px;width:1px;height:9.5px;background:#b8b8b8"></div>
<div class="a" style="left:618px;top:121.9px;width:1px;height:11.5px;background:#b8b8b8"></div>
<div class="a" style="left:618px;top:133.3px;width:1px;height:257.07px;background:#d4d4d4"></div>
<div class="a" style="left:642px;top:85.3px;width:1px;height:305.07px;background:#b8b8b8"></div>
<div class="a" style="left:2.5px;top:358.3px;width:65px;height:72.6px;background:#f0f0f0;border:0.8px solid #bcbcbc"></div>
<div class="a" style="left:3px;top:358.8px;width:64px;height:9.6px;background:#fff"></div>
<div class="t" style="left:4.2px;top:361.2px;font-size:5.2px;color:#a8a8a8">功能面板</div>
<div class="t" style="left:58.7px;top:360.6px;font-size:6.5px;color:#a8a8a8">✕</div>
<div class="a" style="left:21.2px;top:371.8px;width:28.5px;height:8.4px;background:#e8e8e8;border-right:0.7px solid #b4b4b4;border-bottom:0.7px solid #b4b4b4;border-left:0.7px solid #fafafa;border-top:0.7px solid #fafafa"></div>
<div class="t" style="left:21.2px;top:373.5px;width:28.5px;text-align:center;font-size:5.5px;color:#222">注销</div>
<div class="a" style="left:5.8px;top:382.4px;width:29px;height:8.4px;background:#e8e8e8;border-right:0.7px solid #b4b4b4;border-bottom:0.7px solid #b4b4b4;border-left:0.7px solid #fafafa;border-top:0.7px solid #fafafa"></div>
<div class="t" style="left:5.8px;top:384.1px;width:29px;text-align:center;font-size:5.5px;color:#222">默认状态</div>
<div class="a" style="left:37px;top:382.4px;width:28.5px;height:8.4px;background:#e8e8e8;border-right:0.7px solid #b4b4b4;border-bottom:0.7px solid #b4b4b4;border-left:0.7px solid #fafafa;border-top:0.7px solid #fafafa"></div>
<div class="t" style="left:37px;top:384.1px;width:28.5px;text-align:center;font-size:5.5px;color:#222">首页</div>
<div class="a" style="left:5.8px;top:394px;width:29px;height:8.4px;background:#e8e8e8;border-right:0.7px solid #b4b4b4;border-bottom:0.7px solid #b4b4b4;border-left:0.7px solid #fafafa;border-top:0.7px solid #fafafa"></div>
<div class="t" style="left:5.8px;top:395.7px;width:29px;text-align:center;font-size:5.5px;color:#222">事件窗口</div>
<div class="a" style="left:37px;top:394px;width:28.5px;height:8.4px;background:#e8e8e8;border-right:0.7px solid #b4b4b4;border-bottom:0.7px solid #b4b4b4;border-left:0.7px solid #fafafa;border-top:0.7px solid #fafafa"></div>
<div class="t" style="left:37px;top:395.7px;width:28.5px;text-align:center;font-size:5.5px;color:#222">遥控操作</div>
<div class="a" style="left:5.8px;top:405.9px;width:29px;height:8.4px;background:#e8e8e8;border-right:0.7px solid #b4b4b4;border-bottom:0.7px solid #b4b4b4;border-left:0.7px solid #fafafa;border-top:0.7px solid #fafafa"></div>
<div class="t" style="left:5.8px;top:407.6px;width:29px;text-align:center;font-size:5.5px;color:#222">历史事件</div>
<div class="a" style="left:37px;top:405.9px;width:28.5px;height:8.4px;background:#e8e8e8;border-right:0.7px solid #b4b4b4;border-bottom:0.7px solid #b4b4b4;border-left:0.7px solid #fafafa;border-top:0.7px solid #fafafa"></div>
<div class="t" style="left:37px;top:407.6px;width:28.5px;text-align:center;font-size:5.5px;color:#222">报表查询</div>
<div class="a" style="left:5.8px;top:418px;width:29px;height:8.4px;background:#e8e8e8;border-right:0.7px solid #b4b4b4;border-bottom:0.7px solid #b4b4b4;border-left:0.7px solid #fafafa;border-top:0.7px solid #fafafa"></div>
<div class="t" style="left:5.8px;top:419.7px;width:29px;text-align:center;font-size:5.5px;color:#222">历史曲线</div>
<div class="a" style="left:37px;top:418px;width:28.5px;height:8.4px;background:#e8e8e8;border-right:0.7px solid #b4b4b4;border-bottom:0.7px solid #b4b4b4;border-left:0.7px solid #fafafa;border-top:0.7px solid #fafafa"></div>
<div class="t" style="left:37px;top:419.7px;width:28.5px;text-align:center;font-size:5.5px;color:#222">退出</div>
<div class="a" style="left:0px;top:440.6px;width:830px;height:9px;background:#f0f0f0"></div>
<div class="a" style="left:0px;top:441.9px;width:45.2px;height:7.3px;border-top:1px solid #a4a4a4;border-left:1px solid #a4a4a4;border-right:1px solid #fff"></div>
<div class="a" style="left:46.6px;top:441.9px;width:71.80000000000001px;height:7.3px;border-top:1px solid #a4a4a4;border-left:1px solid #a4a4a4;border-right:1px solid #fff"></div>
<div class="a" style="left:119.6px;top:441.9px;width:110.4px;height:7.3px;border-top:1px solid #a4a4a4;border-left:1px solid #a4a4a4;border-right:1px solid #fff"></div>
<div class="a" style="left:231.2px;top:441.9px;width:114.19999999999999px;height:7.3px;border-top:1px solid #a4a4a4;border-left:1px solid #a4a4a4;border-right:1px solid #fff"></div>
<div class="a" style="left:346.6px;top:441.9px;width:89.39999999999998px;height:7.3px;border-top:1px solid #a4a4a4;border-left:1px solid #a4a4a4;border-right:1px solid #fff"></div>
<div class="a" style="left:437.2px;top:441.9px;width:69.80000000000001px;height:7.3px;border-top:1px solid #a4a4a4;border-left:1px solid #a4a4a4;border-right:1px solid #fff"></div>
<div class="a" style="left:508.2px;top:441.9px;width:312.8px;height:7.3px;border-top:1px solid #a4a4a4;border-left:1px solid #a4a4a4;border-right:1px solid #fff"></div>
<div class="t" style="left:1px;top:443.3px;font-size:5.7px;color:#2a2a2a;transform:scaleX(0.8);transform-origin:0 0">准备好</div>
<div class="t" style="left:47.5px;top:443.3px;font-size:5.7px;color:#2a2a2a;transform:scaleX(0.89);transform-origin:0 0">版本Ver 2.2.0 LEG 3.3.18</div>
<div class="t" style="left:121px;top:443.3px;font-size:5.7px;color:#2a2a2a;transform:scaleX(0.89);transform-origin:0 0">系统时间：2022年07月06日&nbsp; 23:51:52&nbsp; 星期三</div>
<div class="t" style="left:274.5px;top:443.3px;font-size:5.7px;color:#2a2a2a;transform:scaleX(0.89);transform-origin:0 0">安全运行天数： 74</div>
<div class="t" style="left:347.5px;top:443.3px;font-size:5.7px;color:#2a2a2a;transform:scaleX(0.89);transform-origin:0 0">当前用户：Manager</div>
<div class="t" style="left:438px;top:443.3px;font-size:5.7px;color:#2a2a2a;transform:scaleX(0.89);transform-origin:0 0">加密狗状态：异常</div>
<div class="t" style="left:510px;top:443.3px;font-size:5.7px;color:#2a2a2a;transform:scaleX(0.89);transform-origin:0 0">提示：按Alt+D组合键打开功能面板</div>
<div class="a" style="left:0px;top:449.6px;width:830px;height:17.4px;background:#0f1012"></div>
<svg class="a" style="left:5px;top:452px" width="10" height="11" viewBox="0 0 10 11"><g fill="#fff"><path d="M1.6 2.6 L4.6 2.2 V5.2 H1.6 Z"/><path d="M5.2 2.1 L8.6 1.6 V5.2 H5.2 Z"/><path d="M1.6 5.8 H4.6 V8.8 L1.6 8.4 Z"/><path d="M5.2 5.8 H8.6 V9.4 L5.2 8.9 Z"/></g></svg>
<div class="a" style="left:29.6px;top:454.2px;width:5.4px;height:5.4px;border:0.9px solid #e0e0e0;border-radius:50%"></div>
<div class="a" style="left:27.4px;top:460.4px;width:3.4px;height:0.9px;background:#e0e0e0;transform:rotate(-45deg)"></div>
<div class="a" style="left:49.2px;top:454.6px;width:7px;height:6.8px;border:0.8px solid #e0e0e0;border-radius:1.5px"></div>
<div class="a" style="left:46.5px;top:456.2px;width:0.9px;height:4px;background:#e0e0e0"></div>
<div class="a" style="left:57.8px;top:456.2px;width:0.9px;height:4px;background:#e0e0e0"></div>
<div class="a" style="left:68.4px;top:453.6px;width:10.5px;height:8.8px;background:#f6c644;border-radius:0.5px"></div>
<div class="a" style="left:68.4px;top:453.6px;width:4.5px;height:1.5px;background:#e0a820"></div>
<div class="a" style="left:68.4px;top:456.2px;width:10.5px;height:1.8px;background:#ffe89a"></div>
<div class="a" style="left:71.2px;top:459.2px;width:5px;height:2.8px;background:#2f8ee0"></div>
<div class="a" style="left:90.5px;top:454.2px;width:9.5px;height:7px;background:#cfd8e2;border-radius:1px;transform:skewY(-12deg)"></div>
<div class="a" style="left:92px;top:455.6px;width:6.3px;height:4px;background:#7aa4d4;transform:skewY(-12deg)"></div>
<div class="a" style="left:91px;top:461px;width:8px;height:1.5px;background:#9aa4b0"></div>
<div class="a" style="left:111.4px;top:453.2px;width:9.4px;height:9.4px;background:#3f88ea;border-radius:0.8px"></div>
<div class="t" style="left:111.4px;top:454.6px;width:9.6px;text-align:center;font-size:6.5px;color:#fff">W</div>
<div class="a" style="left:132.2px;top:452.8px;width:4.7px;height:4.7px;background:#e43a30"></div>
<div class="a" style="left:137.6px;top:452.8px;width:4.7px;height:4.7px;background:#5a94e4"></div>
<div class="a" style="left:132.2px;top:458.2px;width:4.7px;height:4.7px;background:#f2c432"></div>
<div class="a" style="left:137.6px;top:458.2px;width:4.7px;height:4.7px;background:#52c252"></div>
<div class="a" style="left:152.7px;top:453.6px;width:10.5px;height:8.6px;background:repeating-linear-gradient(90deg,#300606 0 1.2px,#7a1212 1.2px 2.1px);border-top:0.8px solid #3a60c0;opacity:0.9"></div>
<div class="a" style="left:65px;top:465.8px;width:17px;height:1.2px;background:#93aecb"></div>
<div class="a" style="left:86px;top:465.8px;width:18px;height:1.2px;background:#93aecb"></div>
<div class="a" style="left:108px;top:465.8px;width:17px;height:1.2px;background:#93aecb"></div>
<div class="a" style="left:129px;top:465.8px;width:17px;height:1.2px;background:#93aecb"></div>
<div class="a" style="left:150px;top:465.8px;width:17px;height:1.2px;background:#93aecb"></div>
<svg class="a" style="left:700px;top:450px" width="130" height="17" viewBox="0 0 130 17">
<g stroke="#e6e6e6" fill="none" stroke-width="0.8">
<path d="M7.2 9 L9.8 6.4 L12.4 9"/>
<rect x="17.3" y="5.8" width="6" height="4.4"/><path d="M18.6 11.3 H22"/><path d="M16.6 8.5 H17.3 M16.6 7 V10.8 H19"/>
<path d="M26.8 7.2 H28.2 L30.4 5.4 V11.8 L28.2 10 H26.8 Z"/><path d="M31.6 7.3 L33.4 9.2 M33.4 7.3 L31.6 9.2"/>
<rect x="37.2" y="5.9" width="10.4" height="4.8"/>
</g>
<g fill="#d8d8d8"><rect x="38.6" y="7.2" width="1" height="0.9"/><rect x="40.4" y="7.2" width="1" height="0.9"/><rect x="42.2" y="7.2" width="1" height="0.9"/><rect x="44" y="7.2" width="1" height="0.9"/><rect x="45.8" y="7.2" width="1" height="0.9"/><rect x="39.5" y="8.8" width="6" height="0.9"/></g>
<path d="M52 11.3 L54.5 5.4 L57 11.3 M53 9.2 H56" stroke="#e6e6e6" stroke-width="0.8" fill="none"/>
<g transform="rotate(-10 67 8.5)"><rect x="63.8" y="5.1" width="6.6" height="6.8" rx="1" fill="#e8541e"/></g>
<path d="M69 6.8 Q68 6.1 66.6 6.2 Q64.9 6.4 65 7.6 Q65.2 8.6 66.9 8.8 Q68.6 9 68.5 10 Q68.3 11 66.6 11 Q65.4 11 64.9 10.4" stroke="#fff" stroke-width="0.95" fill="none"/>
<path d="M112 5.2 H120.4 V10.4 H116.6 L114.6 12 V10.4 H112 Z" stroke="#e6e6e6" stroke-width="0.8" fill="none"/>
<circle cx="118.6" cy="11.4" r="2.8" fill="#0f1012" stroke="#e6e6e6" stroke-width="0.8"/>
<path d="M118.6 10 V12.8" stroke="#e6e6e6" stroke-width="0.7"/>
</svg>
<div class="t" style="left:783px;top:451.7px;font-size:6px;color:#f0f0f0;letter-spacing:-0.1px">23:51</div>
<div class="t" style="left:779.2px;top:459.9px;font-size:6px;color:#f0f0f0;letter-spacing:-0.15px">2022/7/6</div>
<div class="a" style="left:726.6px;top:438.7px;width:96px;height:9.2px;background:#fff"></div>
<svg class="a" style="left:720px;top:430px" width="106" height="20" viewBox="0 0 106 20">
<g transform="rotate(-14 13.5 13)"><rect x="8" y="7.5" width="11.5" height="11.5" rx="1.5" fill="#f25a1e"/></g>
<path d="M17.6 10.2 Q16.5 9.3 13.8 9.4 Q10.2 9.6 10.3 11.4 Q10.4 12.9 13.6 13.2 Q16.9 13.5 16.8 15.1 Q16.6 16.9 13 16.9 Q10.6 16.9 9.6 15.8" stroke="#fff" stroke-width="1.6" fill="none" stroke-linecap="round"/>
<path d="M22.8 17 L25.6 10.8 L28.4 17 M23.8 14.9 H27.4" stroke="#1a78e0" stroke-width="1.1" fill="none"/>
<circle cx="34.6" cy="12.2" r="0.8" fill="#1a78e0"/><path d="M36.8 13.6 L37.6 13.6 L37 15.2" stroke="#1a78e0" stroke-width="0.9" fill="#1a78e0"/>
<circle cx="46.6" cy="14.1" r="3.3" fill="#1a78e0"/>
<circle cx="45.4" cy="13.3" r="0.55" fill="#fff"/><circle cx="47.8" cy="13.3" r="0.55" fill="#fff"/>
<path d="M45 15.1 Q46.6 16.4 48.2 15.1" stroke="#fff" stroke-width="0.6" fill="none"/>
<rect x="55.7" y="10.4" width="2.5" height="4" rx="1.2" fill="#1a78e0"/>
<path d="M54.6 13.4 Q54.8 16 57 16 Q59.2 16 59.4 13.4" stroke="#1a78e0" stroke-width="0.8" fill="none"/>
<line x1="57" y1="16" x2="57" y2="17.6" stroke="#1a78e0" stroke-width="0.8"/>
<rect x="63.8" y="11.1" width="7.1" height="5.7" rx="1" fill="#2a86e8"/>
<rect x="64.8" y="14.2" width="5" height="1" fill="#cfe4fa"/><rect x="64.8" y="12.4" width="1" height="1" fill="#cfe4fa"/>
<circle cx="77.5" cy="12.2" r="1.7" fill="#cfcfcf"/><path d="M74.6 17 Q74.8 14.4 77.5 14.4 Q80.2 14.4 80.4 17 Z" fill="#cfcfcf"/>
<path d="M84.7 12.2 L86.8 10.8 L88.8 11.6 L90.8 10.8 L92.9 12.2 L91.7 14.1 L90.9 13.8 L90.9 17 L86.7 17 L86.7 13.8 L85.9 14.1 Z" fill="#1a78e0"/>
<rect x="95.2" y="11" width="2.8" height="2.8" rx="0.6" fill="#1a78e0"/><rect x="98.5" y="11" width="2.8" height="2.8" rx="0.6" fill="#1a78e0"/>
<rect x="95.2" y="14.2" width="2.8" height="2.8" rx="0.6" fill="#1a78e0"/><rect x="98.5" y="14.2" width="2.8" height="2.8" rx="0.6" fill="#1a78e0"/>
</svg>
</body></html>
